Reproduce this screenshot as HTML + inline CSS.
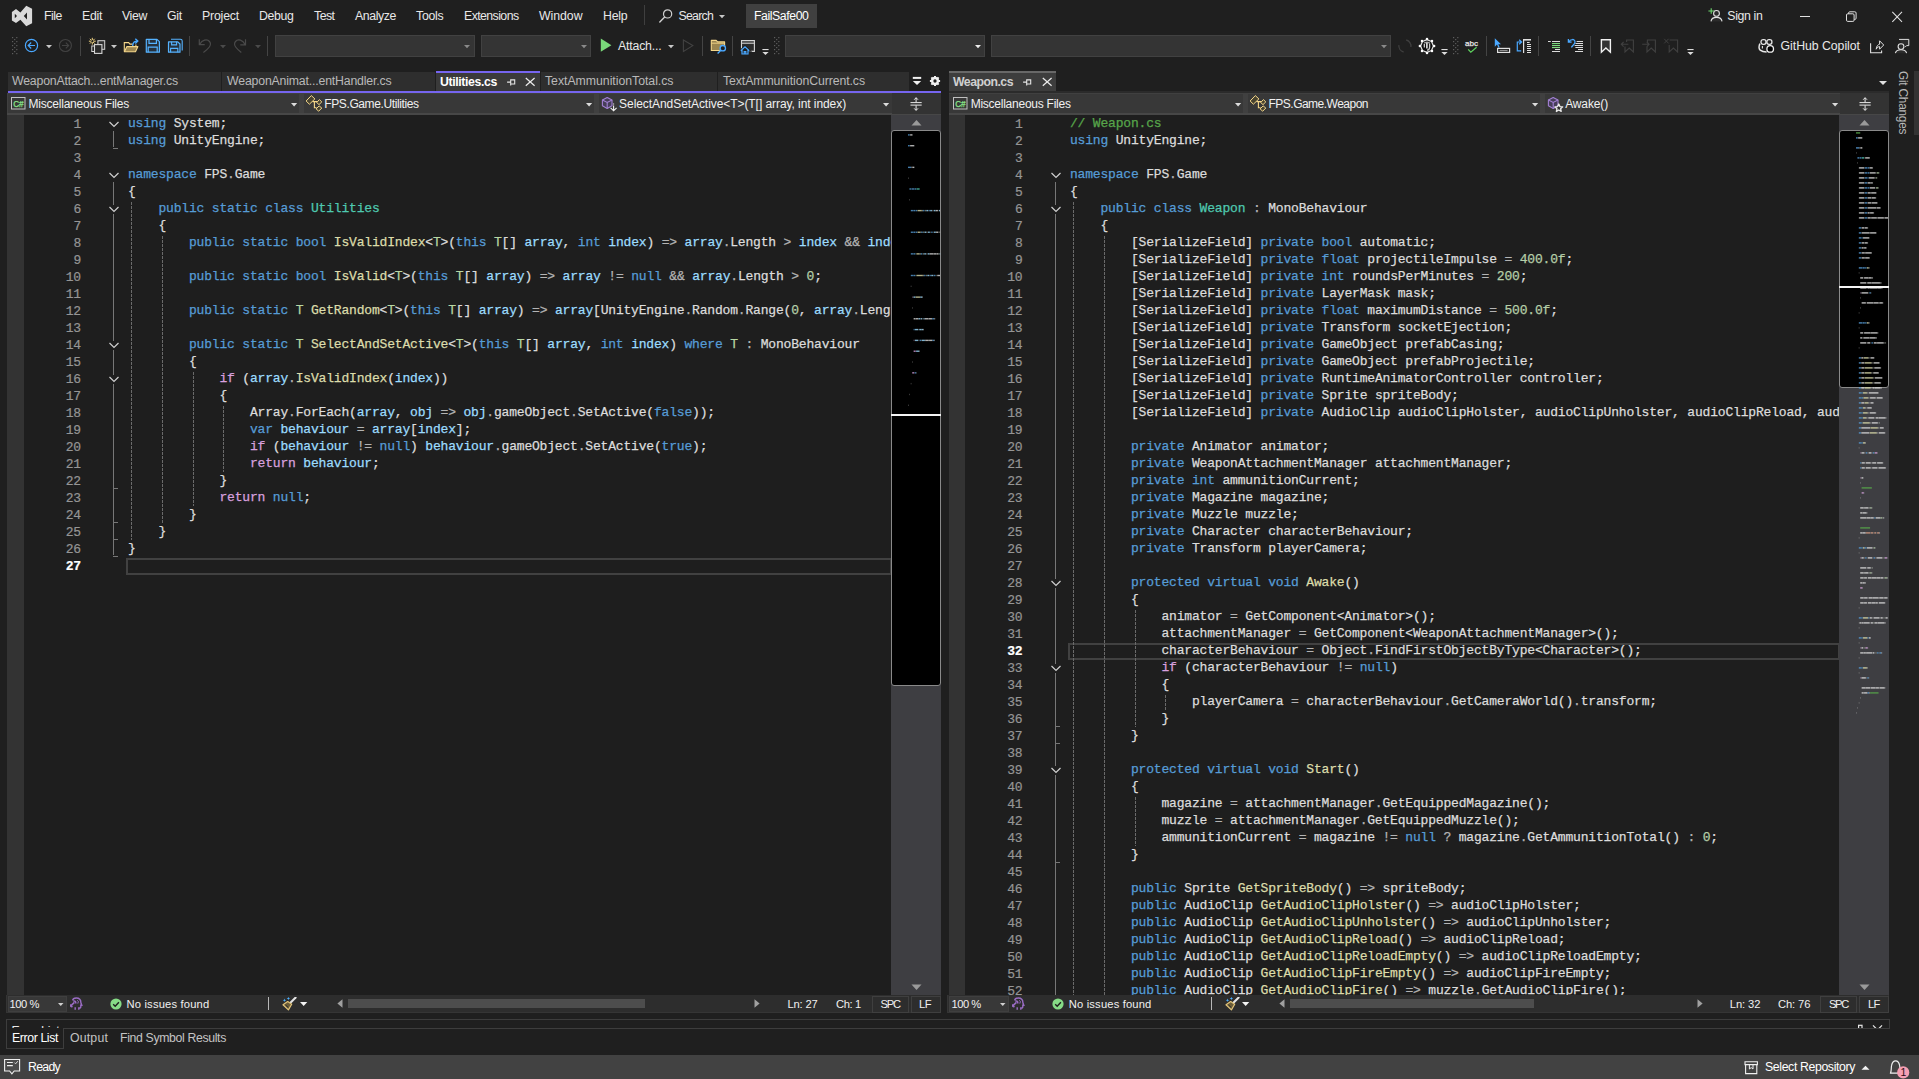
<!DOCTYPE html>
<html><head><meta charset="utf-8"><title>Visual Studio</title><style>
html,body{margin:0;padding:0;background:#1f1f1f;}
body{width:1919px;height:1079px;overflow:hidden;position:relative;font-family:"Liberation Sans",sans-serif;}
.a{position:absolute;box-sizing:border-box;}
.t{white-space:pre;}
.code{position:absolute;white-space:pre;font-family:"Liberation Mono",monospace;font-size:13px;letter-spacing:-0.18px;line-height:17px;height:17px;color:#dcdcdc;-webkit-text-stroke:0.25px currentColor;}
.ln{position:absolute;white-space:pre;font-family:"Liberation Mono",monospace;font-size:13px;letter-spacing:-0.18px;line-height:17px;height:17px;color:#959595;text-align:right;width:60px;margin-top:1px;-webkit-text-stroke:0.2px currentColor;}
.k{color:#569cd6}.c{color:#d8a0df}.ty{color:#4ec9b0}.tp{color:#b8d7a3}.m{color:#dcdcaa}.v{color:#9cdcfe}.n{color:#b5cea8}.o{color:#b4b4b4}.cm{color:#57a64a}
.clip{position:absolute;overflow:hidden;}
</style></head><body>
<svg class="a" style="left:11px;top:4px;" width="22" height="24" viewBox="0 0 22 24"><path d="M15.25 1.8 L21.1 4.75 V19.3 L15.25 22.25 L9.4 15.8 L5 19.1 L0.9 16.4 V8.1 L5 5 L9.4 8.4 Z M3.8 9.8 V14.3 L6 12 Z M16 8.5 V15.6 L12.8 12 Z" fill="#d9d9d9" fill-rule="evenodd"/></svg>
<div class="a t" style="left:44px;top:6.0px;height:20px;line-height:20px;font-size:12.3px;color:#e8e8e8;letter-spacing:-0.455px;">File</div>
<div class="a t" style="left:82px;top:6.0px;height:20px;line-height:20px;font-size:12.3px;color:#e8e8e8;letter-spacing:-0.299px;">Edit</div>
<div class="a t" style="left:122px;top:6.0px;height:20px;line-height:20px;font-size:12.3px;color:#e8e8e8;letter-spacing:-0.360px;">View</div>
<div class="a t" style="left:167px;top:6.0px;height:20px;line-height:20px;font-size:12.3px;color:#e8e8e8;letter-spacing:-0.239px;">Git</div>
<div class="a t" style="left:202px;top:6.0px;height:20px;line-height:20px;font-size:12.3px;color:#e8e8e8;letter-spacing:-0.183px;">Project</div>
<div class="a t" style="left:259px;top:6.0px;height:20px;line-height:20px;font-size:12.3px;color:#e8e8e8;letter-spacing:-0.349px;">Debug</div>
<div class="a t" style="left:314px;top:6.0px;height:20px;line-height:20px;font-size:12.3px;color:#e8e8e8;letter-spacing:-0.515px;">Test</div>
<div class="a t" style="left:355px;top:6.0px;height:20px;line-height:20px;font-size:12.3px;color:#e8e8e8;letter-spacing:-0.394px;">Analyze</div>
<div class="a t" style="left:416px;top:6.0px;height:20px;line-height:20px;font-size:12.3px;color:#e8e8e8;letter-spacing:-0.243px;">Tools</div>
<div class="a t" style="left:464px;top:6.0px;height:20px;line-height:20px;font-size:12.3px;color:#e8e8e8;letter-spacing:-0.567px;">Extensions</div>
<div class="a t" style="left:539px;top:6.0px;height:20px;line-height:20px;font-size:12.3px;color:#e8e8e8;letter-spacing:-0.041px;">Window</div>
<div class="a t" style="left:603px;top:6.0px;height:20px;line-height:20px;font-size:12.3px;color:#e8e8e8;letter-spacing:-0.199px;">Help</div>
<div class="a" style="left:644px;top:5px;width:1px;height:20px;background:#3f3f3f;"></div>
<svg class="a" style="left:658px;top:8px;" width="16" height="16" viewBox="0 0 16 16"><circle cx="9.6" cy="5.9" r="4.1" fill="none" stroke="#d0d0d0" stroke-width="1.2"/><path d="M6.7 8.9 L1.8 13.9" stroke="#d0d0d0" stroke-width="1.4" stroke-linecap="round"/></svg>
<div class="a t" style="left:678.5px;top:6.0px;height:20px;line-height:20px;font-size:12.3px;color:#e8e8e8;letter-spacing:-0.746px;">Search</div>
<svg class="a" style="left:718.0px;top:13.749999999999998px;" width="8" height="5.3" viewBox="0 0 8 5.3"><path d="M1 1 H7 L4.0 4.3 Z" fill="#c8c8c8"/></svg>
<div class="a" style="left:746px;top:4px;width:71px;height:23.5px;background:#404040;"></div>
<div class="a t" style="left:754px;top:6.0px;height:20px;line-height:20px;font-size:12.3px;color:#ffffff;letter-spacing:-0.431px;">FailSafe00</div>
<svg class="a" style="left:1707px;top:6px;" width="17" height="17" viewBox="0 0 17 17"><circle cx="9.5" cy="7.4" r="2.9" fill="#2b2b2b" stroke="#e0e0e0" stroke-width="1.1"/><path d="M4 15.4 C4.3 12.6 6.5 11.4 9.5 11.4 C12.5 11.4 14.7 12.6 15 15.4" fill="#2b2b2b" stroke="#e0e0e0" stroke-width="1.1"/><path d="M1.4 5 H7 M4.2 2.2 V7.8" stroke="#6fd76f" stroke-width="1.1"/></svg>
<div class="a t" style="left:1727.3px;top:6.0px;height:20px;line-height:20px;font-size:12.3px;color:#e8e8e8;letter-spacing:-0.344px;">Sign in</div>
<div class="a" style="left:1800px;top:15.5px;width:10px;height:1px;background:#e0e0e0;"></div>
<svg class="a" style="left:1845px;top:10px;" width="13" height="13" viewBox="0 0 13 13"><rect x="1.5" y="3.8" width="7.6" height="7.6" fill="none" stroke="#e0e0e0" stroke-width="1" rx="1.2"/><path d="M3.6 3.8 V3 Q3.6 1.8 4.8 1.8 H9.8 Q11.1 1.8 11.1 3 V8.2 Q11.1 9.4 9.9 9.4 H9.2" fill="none" stroke="#e0e0e0" stroke-width="1"/></svg>
<svg class="a" style="left:1891px;top:10px;" width="13" height="13" viewBox="0 0 13 13"><path d="M1.3 1.9 L11 11.8 M11 1.9 L1.3 11.8" stroke="#e0e0e0" stroke-width="1.05"/></svg>
<svg class="a" style="left:11.8px;top:37px;" width="6" height="18" viewBox="0 0 6 18"><rect x="0" y="0" width="1.2" height="1.2" fill="#5e5e5e"/><rect x="4.2" y="0" width="1.2" height="1.2" fill="#5e5e5e"/><rect x="2.1" y="2" width="1.2" height="1.2" fill="#5e5e5e"/><rect x="0" y="4" width="1.2" height="1.2" fill="#5e5e5e"/><rect x="4.2" y="4" width="1.2" height="1.2" fill="#5e5e5e"/><rect x="2.1" y="6" width="1.2" height="1.2" fill="#5e5e5e"/><rect x="0" y="8" width="1.2" height="1.2" fill="#5e5e5e"/><rect x="4.2" y="8" width="1.2" height="1.2" fill="#5e5e5e"/><rect x="2.1" y="10" width="1.2" height="1.2" fill="#5e5e5e"/><rect x="0" y="12" width="1.2" height="1.2" fill="#5e5e5e"/><rect x="4.2" y="12" width="1.2" height="1.2" fill="#5e5e5e"/><rect x="2.1" y="14" width="1.2" height="1.2" fill="#5e5e5e"/><rect x="0" y="16" width="1.2" height="1.2" fill="#5e5e5e"/><rect x="4.2" y="16" width="1.2" height="1.2" fill="#5e5e5e"/></svg>
<svg class="a" style="left:23px;top:37px;" width="17" height="17" viewBox="0 0 17 17"><circle cx="8.5" cy="8.5" r="6.1" fill="none" stroke="#4aa8ff" stroke-width="1.2"/><path d="M12 8.5 H5.4 M8.2 5.5 L5.2 8.5 L8.2 11.5" fill="none" stroke="#4aa8ff" stroke-width="1.2"/></svg>
<svg class="a" style="left:45.0px;top:43.95px;" width="8" height="5.3" viewBox="0 0 8 5.3"><path d="M1 1 H7 L4.0 4.3 Z" fill="#c8c8c8"/></svg>
<svg class="a" style="left:57px;top:37px;" width="17" height="17" viewBox="0 0 17 17"><circle cx="8.4" cy="8.5" r="6" fill="none" stroke="#424242" stroke-width="1.1"/><path d="M5 8.5 H11.6 M8.8 5.6 L11.7 8.5 L8.8 11.4" fill="none" stroke="#424242" stroke-width="1.1"/></svg>
<div class="a" style="left:80px;top:36px;width:1px;height:20px;background:#444444;"></div>
<svg class="a" style="left:88px;top:37px;" width="18" height="18" viewBox="0 0 18 18"><rect x="9.9" y="3.7" width="6.8" height="8.6" fill="#333333" stroke="#d6d6d6" stroke-width="1"/><rect x="3.8" y="9" width="4" height="5.5" fill="none" stroke="#d6d6d6" stroke-width="1"/><rect x="6.5" y="7.6" width="7.4" height="8.8" fill="#2a2a2a" stroke="#d6d6d6" stroke-width="1.1"/><path d="M4.3 0.8 V7.6 M0.9 4.2 H7.7 M1.9 1.8 L6.7 6.6 M6.7 1.8 L1.9 6.6" stroke="#ffe08a" stroke-width="0.95"/><circle cx="4.3" cy="4.2" r="1.1" fill="#1f1f1f"/></svg>
<svg class="a" style="left:110.0px;top:43.95px;" width="8" height="5.3" viewBox="0 0 8 5.3"><path d="M1 1 H7 L4.0 4.3 Z" fill="#c8c8c8"/></svg>
<svg class="a" style="left:123px;top:37px;" width="18" height="18" viewBox="0 0 18 18"><path d="M1.3 14.6 V5.6 H5.6 L7 7.1 H9.6" fill="none" stroke="#f5d78a" stroke-width="1.1"/><path d="M12.9 9.4 V7.6" stroke="#f5d78a" stroke-width="1.1"/><path d="M1.4 14.8 L3.9 9.6 H14.9 L12.5 14.8 Z" fill="#9c8650" stroke="#f5d78a" stroke-width="1.1" stroke-linejoin="round"/><path d="M9.7 9 C9.7 5.6 11.4 4.1 14.2 4.1 M12.3 1.7 L14.8 4.1 L12.3 6.5" fill="none" stroke="#4aa8ff" stroke-width="1.4"/></svg>
<svg class="a" style="left:145px;top:38px;" width="16" height="16" viewBox="0 0 16 16"><path d="M1.3 1.3 H12 L14.4 3.7 V14.2 H1.3 Z" fill="#26313c" stroke="#55b3ff" stroke-width="1.2" stroke-linejoin="round"/><path d="M4 1.3 V5.4 H11.4 V1.3 M3.2 14.2 V9.2 H12.2 V14.2" fill="none" stroke="#55b3ff" stroke-width="1.2"/></svg>
<svg class="a" style="left:167px;top:38px;" width="17" height="16" viewBox="0 0 17 16"><path d="M4 1.3 H13.4 Q15.2 1.3 15.2 3.1 V12.4" fill="none" stroke="#55b3ff" stroke-width="1.1"/><path d="M1.5 3.8 H10.8 L13 6 V14.2 H1.5 Z" fill="#26313c" stroke="#55b3ff" stroke-width="1.2" stroke-linejoin="round"/><path d="M4.6 3.8 V6.9 H9.6 V3.8 M3.6 14.2 V10.4 H10.8 V14.2" fill="none" stroke="#55b3ff" stroke-width="1.1"/></svg>
<div class="a" style="left:189px;top:36px;width:1px;height:20px;background:#444444;"></div>
<svg class="a" style="left:197px;top:38px;" width="16" height="16" viewBox="0 0 16 16"><path d="M2.3 1.2 V6.6 H7.7 M2.8 6.2 C5 2 10 0.5 12.5 3.5 C15.5 7 11 11 6.4 14.5" fill="none" stroke="#4a4a4a" stroke-width="1.2"/></svg>
<svg class="a" style="left:219.0px;top:43.75px;" width="8" height="5.3" viewBox="0 0 8 5.3"><path d="M1 1 H7 L4.0 4.3 Z" fill="#4a4a4a"/></svg>
<svg class="a" style="left:232px;top:38px;" width="16" height="16" viewBox="0 0 16 16"><path d="M13.5 1.2 V6.8 H8.3 M13 6.4 C11 2 6 0.5 3.5 3.5 C0.5 7 5 11 9.3 14.5" fill="none" stroke="#4a4a4a" stroke-width="1.2"/></svg>
<svg class="a" style="left:254.0px;top:43.75px;" width="8" height="5.3" viewBox="0 0 8 5.3"><path d="M1 1 H7 L4.0 4.3 Z" fill="#4a4a4a"/></svg>
<div class="a" style="left:267px;top:36px;width:1px;height:20px;background:#444444;"></div>
<div class="a" style="left:274.5px;top:35px;width:200px;height:21.5px;background:#343434;border:1px solid #414141;"></div>
<svg class="a" style="left:463.3px;top:43.85px;" width="8" height="5.3" viewBox="0 0 8 5.3"><path d="M1 1 H7 L4.0 4.3 Z" fill="#8a8a8a"/></svg>
<div class="a" style="left:480.5px;top:35px;width:110.5px;height:21.5px;background:#343434;border:1px solid #414141;"></div>
<svg class="a" style="left:579.8px;top:43.85px;" width="8" height="5.3" viewBox="0 0 8 5.3"><path d="M1 1 H7 L4.0 4.3 Z" fill="#8a8a8a"/></svg>
<svg class="a" style="left:600px;top:38px;" width="13" height="14" viewBox="0 0 13 14"><path d="M0.8 0.6 L11.4 7.2 L0.8 13.8 Z" fill="#79d879"/></svg>
<div class="a t" style="left:618px;top:36.0px;height:20px;line-height:20px;font-size:12.3px;color:#e8e8e8;letter-spacing:-0.180px;">Attach...</div>
<svg class="a" style="left:667.0px;top:43.65px;" width="8" height="5.3" viewBox="0 0 8 5.3"><path d="M1 1 H7 L4.0 4.3 Z" fill="#c8c8c8"/></svg>
<svg class="a" style="left:682px;top:39px;" width="12" height="14" viewBox="0 0 12 14"><path d="M1.4 1 L10.8 6.6 L1.4 12.4 Z" fill="none" stroke="#424242" stroke-width="1.1"/></svg>
<div class="a" style="left:702px;top:36px;width:1px;height:20px;background:#444444;"></div>
<svg class="a" style="left:710px;top:38px;" width="18" height="17" viewBox="0 0 18 17"><path d="M1.3 2.4 H6.2 L7.6 3.9 H14.6 V12.5 H1.3 Z" fill="#9c8650" stroke="#f5d78a" stroke-width="1.1" stroke-linejoin="round"/><path d="M1.3 5.2 H14.6" stroke="#f5d78a" stroke-width="0.9"/><circle cx="12.8" cy="10.2" r="2.7" fill="#1f1f1f" stroke="#4aa8ff" stroke-width="1.3"/><path d="M10.9 12.2 L7.6 15.6" stroke="#4aa8ff" stroke-width="1.4"/></svg>
<div class="a" style="left:732px;top:36px;width:1px;height:20px;background:#444444;"></div>
<svg class="a" style="left:739px;top:38px;" width="18" height="18" viewBox="0 0 18 18"><path d="M2.5 2.6 H15.4 V13.4 H2.5 Z" fill="#2b2b2b" stroke="#d4d4d4" stroke-width="1.1"/><path d="M2.5 5.2 H15.4" stroke="#d4d4d4" stroke-width="1.1"/><path d="M1.6 12.6 L6 8.6 L10.4 12.6 L9.2 12.6 V16 H2.8 V12.6 Z" fill="#1f1f1f" stroke="#1f1f1f" stroke-width="2.2"/><path d="M1.8 12.8 L6 8.9 L10.2 12.8 M3 11.9 V16 H9 V11.9 M5.2 16 V13.6 H6.8 V16" fill="none" stroke="#4aa8ff" stroke-width="1.2"/></svg>
<svg class="a" style="left:762.3px;top:49.0px;" width="7" height="7" viewBox="0 0 7 7"><rect x="0.4" y="0" width="6.2" height="1.1" fill="#dcdcdc"/><path d="M0.4 3 H6.6 L3.5 6.1 Z" fill="#dcdcdc"/></svg>
<svg class="a" style="left:773.6px;top:37px;" width="6" height="18" viewBox="0 0 6 18"><rect x="0" y="0" width="1.2" height="1.2" fill="#5e5e5e"/><rect x="4.2" y="0" width="1.2" height="1.2" fill="#5e5e5e"/><rect x="2.1" y="2" width="1.2" height="1.2" fill="#5e5e5e"/><rect x="0" y="4" width="1.2" height="1.2" fill="#5e5e5e"/><rect x="4.2" y="4" width="1.2" height="1.2" fill="#5e5e5e"/><rect x="2.1" y="6" width="1.2" height="1.2" fill="#5e5e5e"/><rect x="0" y="8" width="1.2" height="1.2" fill="#5e5e5e"/><rect x="4.2" y="8" width="1.2" height="1.2" fill="#5e5e5e"/><rect x="2.1" y="10" width="1.2" height="1.2" fill="#5e5e5e"/><rect x="0" y="12" width="1.2" height="1.2" fill="#5e5e5e"/><rect x="4.2" y="12" width="1.2" height="1.2" fill="#5e5e5e"/><rect x="2.1" y="14" width="1.2" height="1.2" fill="#5e5e5e"/><rect x="0" y="16" width="1.2" height="1.2" fill="#5e5e5e"/><rect x="4.2" y="16" width="1.2" height="1.2" fill="#5e5e5e"/></svg>
<div class="a" style="left:785px;top:35px;width:200px;height:21.5px;background:#343434;border:1px solid #414141;"></div>
<svg class="a" style="left:973.8px;top:43.85px;" width="8" height="5.3" viewBox="0 0 8 5.3"><path d="M1 1 H7 L4.0 4.3 Z" fill="#ececec"/></svg>
<div class="a" style="left:991px;top:35px;width:400px;height:21.5px;background:#343434;border:1px solid #414141;"></div>
<svg class="a" style="left:1379.8px;top:43.85px;" width="8" height="5.3" viewBox="0 0 8 5.3"><path d="M1 1 H7 L4.0 4.3 Z" fill="#8a8a8a"/></svg>
<svg class="a" style="left:1397px;top:38px;" width="16" height="16" viewBox="0 0 16 16"><path d="M9.2 2 A6.2 6.2 0 0 1 13.9 9" fill="none" stroke="#3f3f3f" stroke-width="1.3"/><path d="M6.6 14 A6.2 6.2 0 0 1 1.9 7.2" fill="none" stroke="#3f3f3f" stroke-width="1.3"/></svg>
<svg class="a" style="left:1418px;top:37px;" width="18" height="18" viewBox="0 0 18 18"><path d="M9.00 2.60 L13.53 4.47 L15.40 9.00 L13.53 13.53 L9.00 15.40 L4.47 13.53 L2.60 9.00 L4.47 4.47 Z" fill="#0c0c0c" stroke="#e0e0e0" stroke-width="1.25" stroke-linejoin="round"/><g fill="#ffffff"><circle cx="9.00" cy="1.90" r="1.25"/><circle cx="14.02" cy="3.98" r="1.25"/><circle cx="16.10" cy="9.00" r="1.25"/><circle cx="14.02" cy="14.02" r="1.25"/><circle cx="9.00" cy="16.10" r="1.25"/><circle cx="3.98" cy="14.02" r="1.25"/><circle cx="1.90" cy="9.00" r="1.25"/><circle cx="3.98" cy="3.98" r="1.25"/></g><path d="M6.2 6.4 C7 4.8 11 4.8 11.8 6.4" fill="none" stroke="#9a9a9a" stroke-width="1.6"/><path d="M8.9 5.8 V11.6" stroke="#f4f4f4" stroke-width="1.5"/><path d="M11.6 6.6 V10.4 C11.4 12.4 10 13.2 9 13.2" fill="none" stroke="#c8c8c8" stroke-width="1.3"/><path d="M6.3 7 V10.6" stroke="#d8d8d8" stroke-width="1.2"/></svg>
<svg class="a" style="left:1441.4px;top:49.0px;" width="7" height="7" viewBox="0 0 7 7"><rect x="0.4" y="0" width="6.2" height="1.1" fill="#dcdcdc"/><path d="M0.4 3 H6.6 L3.5 6.1 Z" fill="#dcdcdc"/></svg>
<svg class="a" style="left:1452.8px;top:37px;" width="6" height="18" viewBox="0 0 6 18"><rect x="0" y="0" width="1.2" height="1.2" fill="#5e5e5e"/><rect x="4.2" y="0" width="1.2" height="1.2" fill="#5e5e5e"/><rect x="2.1" y="2" width="1.2" height="1.2" fill="#5e5e5e"/><rect x="0" y="4" width="1.2" height="1.2" fill="#5e5e5e"/><rect x="4.2" y="4" width="1.2" height="1.2" fill="#5e5e5e"/><rect x="2.1" y="6" width="1.2" height="1.2" fill="#5e5e5e"/><rect x="0" y="8" width="1.2" height="1.2" fill="#5e5e5e"/><rect x="4.2" y="8" width="1.2" height="1.2" fill="#5e5e5e"/><rect x="2.1" y="10" width="1.2" height="1.2" fill="#5e5e5e"/><rect x="0" y="12" width="1.2" height="1.2" fill="#5e5e5e"/><rect x="4.2" y="12" width="1.2" height="1.2" fill="#5e5e5e"/><rect x="2.1" y="14" width="1.2" height="1.2" fill="#5e5e5e"/><rect x="0" y="16" width="1.2" height="1.2" fill="#5e5e5e"/><rect x="4.2" y="16" width="1.2" height="1.2" fill="#5e5e5e"/></svg>
<svg class="a" style="left:1464px;top:38px;" width="16" height="16" viewBox="0 0 16 16"><text x="1" y="7.9" font-family="Liberation Sans" font-size="7.6" fill="#e6e6e6" stroke="#e6e6e6" stroke-width="0.25" textLength="13" lengthAdjust="spacingAndGlyphs">abc</text><path d="M4.2 11.4 L6.8 14.2 L12.6 9.2" fill="none" stroke="#5fd35f" stroke-width="1.2"/></svg>
<div class="a" style="left:1486px;top:36px;width:1px;height:20px;background:#444444;"></div>
<svg class="a" style="left:1494px;top:38px;" width="17" height="17" viewBox="0 0 17 17"><path d="M0.8 0.3 V8.8 L3 6.6 L4.4 9.8 L5.7 9.2 L4.3 6.2 H7 Z" fill="#4aa8ff"/><rect x="3.6" y="10.4" width="12" height="4" fill="none" stroke="#e0e0e0" stroke-width="1.2"/><path d="M5.5 12.4 H13.6" stroke="#bdbdbd" stroke-width="0.8"/></svg>
<svg class="a" style="left:1516px;top:38px;" width="17" height="17" viewBox="0 0 17 17"><path d="M5.2 12.8 H1.3 V4 H4.6 M3.2 1.8 L5.6 4 L3.2 6.2" fill="none" stroke="#4aa8ff" stroke-width="1.2"/><g fill="#e0e0e0"><rect x="7" y="1" width="1.2" height="14"/><rect x="7" y="1" width="8" height="1.6"/><rect x="11" y="4" width="2.6" height="1"/><rect x="11" y="6" width="4" height="1"/><rect x="11" y="8" width="4" height="1"/><rect x="11" y="10" width="4" height="1"/><rect x="11" y="12" width="4" height="1"/><rect x="11" y="14" width="4" height="1"/></g></svg>
<div class="a" style="left:1538px;top:36px;width:1px;height:20px;background:#444444;"></div>
<svg class="a" style="left:1547px;top:38px;" width="15" height="16" viewBox="0 0 15 16"><g fill="#dcdcdc"><rect x="1" y="3" width="2.8" height="1"/><rect x="5" y="3" width="8" height="1"/><rect x="8" y="11" width="5" height="1"/><rect x="5" y="13" width="8" height="1"/></g><g fill="#7fdc7f"><rect x="5" y="5" width="8" height="1.1"/><rect x="5" y="7" width="8" height="1.1"/><rect x="5" y="9" width="8" height="1.1"/></g></svg>
<svg class="a" style="left:1567px;top:38px;" width="17" height="16" viewBox="0 0 17 16"><g fill="#dcdcdc"><rect x="9.6" y="3" width="6.4" height="1"/><rect x="8.4" y="5" width="7.6" height="1"/><rect x="7.6" y="7" width="8.4" height="1"/><rect x="8.4" y="9" width="7.6" height="1"/><rect x="11" y="11" width="5" height="1"/><rect x="8" y="13" width="8" height="1"/></g><path d="M1.4 1 V4.2 H4.6 M1.8 4 C3.4 0.8 8 0.6 8 4 C8 6.4 5.4 7.4 4.4 9.6" fill="none" stroke="#4aa8ff" stroke-width="1.3"/></svg>
<div class="a" style="left:1590px;top:36px;width:1px;height:20px;background:#444444;"></div>
<svg class="a" style="left:1600px;top:38px;" width="12" height="16" viewBox="0 0 12 16"><path d="M1.4 1.8 H10.4 V14.2 L5.9 10 L1.4 14.2 Z" fill="#333333" stroke="#f0f0f0" stroke-width="1.4" stroke-linejoin="miter"/></svg>
<svg class="a" style="left:1620px;top:38px;" width="16" height="16" viewBox="0 0 16 16"><path d="M6.6 4 V2 H13.4 V14 L9.2 10 L5 14 V8.6" fill="none" stroke="#404040" stroke-width="1.1"/><path d="M8.4 6.3 H1.4 M3.6 4 L1.3 6.3 L3.6 8.6" fill="none" stroke="#404040" stroke-width="1.1"/></svg>
<svg class="a" style="left:1641px;top:38px;" width="16" height="16" viewBox="0 0 16 16"><path d="M6.4 4 V2 H14.4 V14 L10.2 10 L6 14 V8.6" fill="none" stroke="#404040" stroke-width="1.1"/><path d="M1.2 6.3 H8 M5.8 4 L8.1 6.3 L5.8 8.6" fill="none" stroke="#404040" stroke-width="1.1"/></svg>
<svg class="a" style="left:1663px;top:38px;" width="16" height="16" viewBox="0 0 16 16"><path d="M6.6 2 H14.6 V14 L10.4 10 L6.2 14 V7" fill="none" stroke="#404040" stroke-width="1.1"/><path d="M1.2 0.8 L5.6 5.4 M5.6 0.8 L1.2 5.4" fill="none" stroke="#404040" stroke-width="1"/></svg>
<svg class="a" style="left:1686.5px;top:49.0px;" width="7" height="7" viewBox="0 0 7 7"><rect x="0.4" y="0" width="6.2" height="1.1" fill="#dcdcdc"/><path d="M0.4 3 H6.6 L3.5 6.1 Z" fill="#dcdcdc"/></svg>
<svg class="a" style="left:1758px;top:38px;" width="18" height="17" viewBox="0 0 18 17"><rect x="3" y="1.6" width="5" height="4.8" rx="2.1" fill="none" stroke="#e6e6e6" stroke-width="1.3"/><rect x="8.9" y="1.6" width="5" height="4.8" rx="2.1" fill="none" stroke="#e6e6e6" stroke-width="1.3"/><path d="M1.9 5.6 C0.9 8 0.9 11 2.2 12.2 C4 13.6 6.4 14 8.6 14" fill="none" stroke="#e6e6e6" stroke-width="1.5"/><path d="M4.4 8 V10.4" stroke="#e6e6e6" stroke-width="1.1"/><circle cx="12.2" cy="10.9" r="3.3" fill="#000000" stroke="#f0f0f0" stroke-width="1.3"/></svg>
<div class="a t" style="left:1780.6px;top:36.0px;height:20px;line-height:20px;font-size:12.3px;color:#e8e8e8;letter-spacing:-0.042px;">GitHub Copilot</div>
<svg class="a" style="left:1869px;top:38px;" width="17" height="17" viewBox="0 0 17 17"><path d="M1.6 5.2 V14.8 H12.6 V12.6" fill="none" stroke="#e0e0e0" stroke-width="1.1"/><path d="M7.2 11.2 C7.5 8 9 6.5 10.6 6.2 V2.8 L14.7 7 L10.6 11.2 V8.6 C9.2 8.6 8.2 9.4 7.2 11.2 Z" fill="none" stroke="#e0e0e0" stroke-width="1" stroke-linejoin="round"/></svg>
<svg class="a" style="left:1894px;top:38px;" width="17" height="17" viewBox="0 0 17 17"><path d="M5 1.4 H14.8 V7.6 H12.6 L11 9.2" fill="#2b2b2b" stroke="#e0e0e0" stroke-width="1" stroke-linejoin="round"/><circle cx="7" cy="8.6" r="2.9" fill="#2b2b2b" stroke="#e0e0e0" stroke-width="1.1"/><path d="M1.4 15.2 C1.8 12.8 4 11.8 7 11.8 C10 11.8 12.2 12.8 12.6 15.2" fill="#2b2b2b" stroke="#e0e0e0" stroke-width="1.1"/></svg>
<div class="a" style="left:8px;top:72px;width:212.5px;height:19.5px;background:#2e2e2e;"></div>
<div class="a t" style="left:12px;top:71.0px;height:20px;line-height:20px;font-size:12.3px;color:#b9b9b9;letter-spacing:-0.193px;">WeaponAttach...entManager.cs</div>
<div class="a" style="left:222px;top:72px;width:213px;height:19.5px;background:#2e2e2e;"></div>
<div class="a t" style="left:227px;top:71.0px;height:20px;line-height:20px;font-size:12.3px;color:#b9b9b9;letter-spacing:-0.173px;">WeaponAnimat...entHandler.cs</div>
<div class="a" style="left:540.5px;top:72px;width:176px;height:19.5px;background:#2e2e2e;"></div>
<div class="a t" style="left:545px;top:71.0px;height:20px;line-height:20px;font-size:12.3px;color:#b9b9b9;letter-spacing:-0.032px;">TextAmmunitionTotal.cs</div>
<div class="a" style="left:718px;top:72px;width:191px;height:19.5px;background:#2e2e2e;"></div>
<div class="a t" style="left:723px;top:71.0px;height:20px;line-height:20px;font-size:12.3px;color:#b9b9b9;letter-spacing:-0.093px;">TextAmmunitionCurrent.cs</div>
<div class="a" style="left:436px;top:71px;width:104px;height:21px;background:#3a3a3a;border-top:2px solid #7665f0;"></div>
<div class="a t" style="left:440px;top:71.5px;height:20px;line-height:20px;font-size:12.3px;color:#ffffff;font-weight:bold;letter-spacing:-0.377px;">Utilities.cs</div>
<svg class="a" style="left:506px;top:76px;" width="11" height="11" viewBox="0 0 11 11"><path d="M1.1 6.1 H4.7 M4.7 3.2 V9.6 M4.7 3.9 H8.7 V8 H4.7" fill="none" stroke="#e6e6e6" stroke-width="1.1"/></svg>
<svg class="a" style="left:523.5px;top:76px;" width="11" height="11" viewBox="0 0 11 11"><path d="M1.8 2 L10.6 9.8 M10.6 2 L1.8 9.8" stroke="#ececec" stroke-width="1.2"/></svg>
<svg class="a" style="left:912px;top:76px;" width="10" height="10" viewBox="0 0 10 10"><rect x="0.8" y="0.9" width="8.4" height="2" fill="#f0f0f0"/><path d="M0.8 5 H9.2 L5 9 Z" fill="#f0f0f0"/></svg>
<svg class="a" style="left:929px;top:75.1px;" width="12" height="12" viewBox="0 0 12 12"><g fill="none" stroke="#f0f0f0"><circle cx="6" cy="6" r="2.9" stroke-width="2.5"/><path d="M9.60 6.00 L11.10 6.00 M8.55 8.55 L9.61 9.61 M6.00 9.60 L6.00 11.10 M3.45 8.55 L2.39 9.61 M2.40 6.00 L0.90 6.00 M3.45 3.45 L2.39 2.39 M6.00 2.40 L6.00 0.90 M8.55 3.45 L9.61 2.39" stroke-width="2"/></g></svg>
<div class="a" style="left:7.5px;top:91px;width:933px;height:2px;background:#7665f0;"></div>
<div class="a" style="left:949px;top:71px;width:107px;height:20px;background:#3d3d3d;border-top:2px solid #686868;"></div>
<div class="a t" style="left:953px;top:71.5px;height:20px;line-height:20px;font-size:12.3px;color:#d0d0d0;font-weight:bold;letter-spacing:-0.523px;">Weapon.cs</div>
<svg class="a" style="left:1022px;top:76px;" width="11" height="11" viewBox="0 0 11 11"><path d="M1.1 6.1 H4.7 M4.7 3.2 V9.6 M4.7 3.9 H8.7 V8 H4.7" fill="none" stroke="#e6e6e6" stroke-width="1.1"/></svg>
<svg class="a" style="left:1040.5px;top:76px;" width="11" height="11" viewBox="0 0 11 11"><path d="M1.8 2 L10.6 9.8 M10.6 2 L1.8 9.8" stroke="#ececec" stroke-width="1.2"/></svg>
<div class="a" style="left:948px;top:91px;width:941px;height:2px;background:#2b2b2b;"></div>
<svg class="a" style="left:1877.8px;top:80.0px;" width="10" height="6" viewBox="0 0 10 6"><path d="M1 1 H9 L5.0 5 Z" fill="#e0e0e0"/></svg>
<div class="a t" style="left:1909.6px;top:70.8px;font-size:11.9px;color:#b8b8b8;transform-origin:0 0;transform:rotate(90deg);line-height:14px;height:14px;letter-spacing:-0.26px;">Git Changes</div>
<div class="a" style="left:1914px;top:71px;width:5px;height:63.5px;background:#333333;"></div>
<div class="a" style="left:6.5px;top:93px;width:934.5px;height:22px;background:#474747;"></div>
<div class="a" style="left:6.5px;top:93px;width:934.5px;height:20px;background:#404040;"></div>
<div class="a" style="left:8px;top:94px;width:291px;height:19px;background:#383838;"></div>
<svg class="a" style="left:11px;top:95.5px;overflow:visible;" width="16" height="16" viewBox="0 0 16 16"><rect x="0.5" y="1.5" width="13.5" height="11.5" fill="none" stroke="#c0c0c0" stroke-width="1"/><text x="2.2" y="10.8" font-family="Liberation Sans" font-size="8.5" fill="#8ae68a" stroke="#8ae68a" stroke-width="0.25" textLength="10.5" lengthAdjust="spacingAndGlyphs">C#</text></svg>
<div class="a t" style="left:28.6px;top:93.6px;height:20px;line-height:20px;font-size:12px;color:#f0f0f0;letter-spacing:-0.227px;">Miscellaneous Files</div>
<svg class="a" style="left:289.7px;top:101.5px;" width="8.2" height="5.4" viewBox="0 0 8.2 5.4"><path d="M1 1 H7.2 L4.1 4.4 Z" fill="#dcdcdc"/></svg>
<div class="a" style="left:304px;top:94px;width:290px;height:19px;background:#383838;"></div>
<svg class="a" style="left:306px;top:95.5px;overflow:visible;" width="16" height="16" viewBox="0 0 16 16"><g fill="#48432f" stroke="#f5d78a" stroke-width="1" stroke-linejoin="round"><path d="M5.3 -0.4 L8.9 2.9 L3.4 8.2 L0.1 5 Z"/><path d="M13.4 3.6 L15.8 5.9 L13 8.6 L10.7 6.5 Z"/><path d="M13.1 9.9 L15.8 12 L12.7 15.2 L10.1 12.9 Z"/></g><path d="M6.6 5.6 H11.2 M8.4 5.6 V11.8 H10.6" fill="none" stroke="#f5d78a" stroke-width="1.1"/></svg>
<div class="a t" style="left:324.3px;top:93.6px;height:20px;line-height:20px;font-size:12px;color:#f0f0f0;letter-spacing:-0.392px;">FPS.Game.Utilities</div>
<svg class="a" style="left:584.6999999999999px;top:101.5px;" width="8.2" height="5.4" viewBox="0 0 8.2 5.4"><path d="M1 1 H7.2 L4.1 4.4 Z" fill="#dcdcdc"/></svg>
<div class="a" style="left:599px;top:94px;width:292.5px;height:19px;background:#383838;"></div>
<svg class="a" style="left:601px;top:95.5px;overflow:visible;" width="16" height="16" viewBox="0 0 16 16"><path d="M1.4 4 L6.2 1.5 L11 4 V9.8 L6.2 12.4 L1.4 9.8 Z" fill="#463e58" stroke="#a381d4" stroke-width="1.1" stroke-linejoin="round"/><path d="M1.4 4 L6.2 6.5 L11 4 M6.2 6.5 V12.4" fill="none" stroke="#a381d4" stroke-width="1.1"/><path d="M12.6 7.6 V8.6 M12.6 9.6 V14.6 M9.6 11.8 L12.6 14.8 L15.6 11.8" fill="none" stroke="#f0f0f0" stroke-width="1.1"/></svg>
<div class="a t" style="left:619.1px;top:93.6px;height:20px;line-height:20px;font-size:12px;color:#f0f0f0;letter-spacing:-0.067px;">SelectAndSetActive&lt;T&gt;(T[] array, int index)</div>
<svg class="a" style="left:882.1999999999999px;top:101.5px;" width="8.2" height="5.4" viewBox="0 0 8.2 5.4"><path d="M1 1 H7.2 L4.1 4.4 Z" fill="#dcdcdc"/></svg>
<div class="a" style="left:892px;top:93px;width:49px;height:20.5px;background:#333333;"></div>
<svg class="a" style="left:910.4px;top:95.5px;" width="12.4" height="16" viewBox="0 0 12.4 16"><path d="M0.5 6.6 H11.7 M0.5 9.1 H11.7 M6.1 1.8 V6.4 M6.1 9.3 V14.2 M4.2 3.7 L6.1 1.7 L8 3.7 M4.2 12.4 L6.1 14.4 L8 12.4" fill="none" stroke="#e8e8e8" stroke-width="1"/></svg>
<div class="a" style="left:947.5px;top:93px;width:941.5px;height:22px;background:#474747;"></div>
<div class="a" style="left:947.5px;top:93px;width:941.5px;height:20px;background:#404040;"></div>
<div class="a" style="left:949px;top:94px;width:294px;height:19px;background:#383838;"></div>
<svg class="a" style="left:952.5px;top:95.5px;overflow:visible;" width="16" height="16" viewBox="0 0 16 16"><rect x="0.5" y="1.5" width="13.5" height="11.5" fill="none" stroke="#c0c0c0" stroke-width="1"/><text x="2.2" y="10.8" font-family="Liberation Sans" font-size="8.5" fill="#8ae68a" stroke="#8ae68a" stroke-width="0.25" textLength="10.5" lengthAdjust="spacingAndGlyphs">C#</text></svg>
<div class="a t" style="left:970.7px;top:93.6px;height:20px;line-height:20px;font-size:12px;color:#f0f0f0;letter-spacing:-0.248px;">Miscellaneous Files</div>
<svg class="a" style="left:1233.7px;top:101.5px;" width="8.2" height="5.4" viewBox="0 0 8.2 5.4"><path d="M1 1 H7.2 L4.1 4.4 Z" fill="#dcdcdc"/></svg>
<div class="a" style="left:1248px;top:94px;width:292px;height:19px;background:#383838;"></div>
<svg class="a" style="left:1249.8px;top:95.5px;overflow:visible;" width="16" height="16" viewBox="0 0 16 16"><g fill="#48432f" stroke="#f5d78a" stroke-width="1" stroke-linejoin="round"><path d="M5.3 -0.4 L8.9 2.9 L3.4 8.2 L0.1 5 Z"/><path d="M13.4 3.6 L15.8 5.9 L13 8.6 L10.7 6.5 Z"/><path d="M13.1 9.9 L15.8 12 L12.7 15.2 L10.1 12.9 Z"/></g><path d="M6.6 5.6 H11.2 M8.4 5.6 V11.8 H10.6" fill="none" stroke="#f5d78a" stroke-width="1.1"/></svg>
<div class="a t" style="left:1268.5px;top:93.6px;height:20px;line-height:20px;font-size:12px;color:#f0f0f0;letter-spacing:-0.511px;">FPS.Game.Weapon</div>
<svg class="a" style="left:1530.7px;top:101.5px;" width="8.2" height="5.4" viewBox="0 0 8.2 5.4"><path d="M1 1 H7.2 L4.1 4.4 Z" fill="#dcdcdc"/></svg>
<div class="a" style="left:1545px;top:94px;width:295px;height:19px;background:#383838;"></div>
<svg class="a" style="left:1547.1px;top:95.5px;overflow:visible;" width="16" height="16" viewBox="0 0 16 16"><path d="M1.4 4 L6.2 1.5 L11 4 V9.8 L6.2 12.4 L1.4 9.8 Z" fill="#463e58" stroke="#a381d4" stroke-width="1.1" stroke-linejoin="round"/><path d="M1.4 4 L6.2 6.5 L11 4 M6.2 6.5 V12.4" fill="none" stroke="#a381d4" stroke-width="1.1"/><path d="M11.80 8.00 L12.92 10.56 L15.70 10.83 L13.61 12.69 L14.21 15.42 L11.80 14.00 L9.39 15.42 L9.99 12.69 L7.90 10.83 L10.68 10.56 Z" fill="#2e2e2e" stroke="#ececec" stroke-width="1.35" stroke-linejoin="round"/></svg>
<div class="a t" style="left:1565.2px;top:93.6px;height:20px;line-height:20px;font-size:12px;color:#f0f0f0;letter-spacing:-0.142px;">Awake()</div>
<svg class="a" style="left:1830.7px;top:101.5px;" width="8.2" height="5.4" viewBox="0 0 8.2 5.4"><path d="M1 1 H7.2 L4.1 4.4 Z" fill="#dcdcdc"/></svg>
<div class="a" style="left:1840px;top:93px;width:49px;height:20.5px;background:#333333;"></div>
<svg class="a" style="left:1858.6px;top:95.5px;" width="12.4" height="16" viewBox="0 0 12.4 16"><path d="M0.5 6.6 H11.7 M0.5 9.1 H11.7 M6.1 1.8 V6.4 M6.1 9.3 V14.2 M4.2 3.7 L6.1 1.7 L8 3.7 M4.2 12.4 L6.1 14.4 L8 12.4" fill="none" stroke="#e8e8e8" stroke-width="1"/></svg>
<div class="a" style="left:8px;top:115px;width:933px;height:880px;background:#1e1e1e;"></div>
<div class="a" style="left:6.5px;top:115px;width:17.8px;height:880px;background:#333333;"></div>
<div class="clip" style="left:8px;top:115px;width:883px;height:880px;">
<div class="a" style="left:118px;top:442.5px;width:766px;height:17.5px;border:2px solid #414141;"></div>
<div class="a" style="left:123.00px;top:87px;width:1px;height:338px;background:repeating-linear-gradient(to bottom,#6a6a6a 0,#6a6a6a 3px,transparent 3px,transparent 4px);"></div>
<div class="a" style="left:154.00px;top:121px;width:1px;height:287px;background:repeating-linear-gradient(to bottom,#6a6a6a 0,#6a6a6a 3px,transparent 3px,transparent 4px);"></div>
<div class="a" style="left:185.00px;top:257px;width:1px;height:134px;background:repeating-linear-gradient(to bottom,#6a6a6a 0,#6a6a6a 3px,transparent 3px,transparent 4px);"></div>
<div class="a" style="left:215.00px;top:291px;width:1px;height:66px;background:repeating-linear-gradient(to bottom,#6a6a6a 0,#6a6a6a 3px,transparent 3px,transparent 4px);"></div>
<div class="a" style="left:105px;top:16px;width:1px;height:16px;background:#777777;"></div>
<div class="a" style="left:105px;top:33px;width:5px;height:1px;background:#777777;"></div>
<div class="a" style="left:105px;top:67px;width:1px;height:373px;background:#777777;"></div>
<div class="a" style="left:105px;top:373px;width:5px;height:1px;background:#777777;"></div>
<div class="a" style="left:105px;top:407px;width:5px;height:1px;background:#777777;"></div>
<div class="a" style="left:105px;top:424px;width:5px;height:1px;background:#777777;"></div>
<div class="a" style="left:105px;top:441px;width:5px;height:1px;background:#777777;"></div>
<svg class="a" style="left:99.5px;top:5px;background:#1e1e1e" width="12" height="9" viewBox="0 0 12 9"><path d="M1.5 2 L6 6.5 L10.5 2" fill="none" stroke="#d0d0d0" stroke-width="1.2"/></svg>
<svg class="a" style="left:99.5px;top:56px;background:#1e1e1e" width="12" height="9" viewBox="0 0 12 9"><path d="M1.5 2 L6 6.5 L10.5 2" fill="none" stroke="#d0d0d0" stroke-width="1.2"/></svg>
<svg class="a" style="left:99.5px;top:90px;background:#1e1e1e" width="12" height="9" viewBox="0 0 12 9"><path d="M1.5 2 L6 6.5 L10.5 2" fill="none" stroke="#d0d0d0" stroke-width="1.2"/></svg>
<svg class="a" style="left:99.5px;top:226px;background:#1e1e1e" width="12" height="9" viewBox="0 0 12 9"><path d="M1.5 2 L6 6.5 L10.5 2" fill="none" stroke="#d0d0d0" stroke-width="1.2"/></svg>
<svg class="a" style="left:99.5px;top:260px;background:#1e1e1e" width="12" height="9" viewBox="0 0 12 9"><path d="M1.5 2 L6 6.5 L10.5 2" fill="none" stroke="#d0d0d0" stroke-width="1.2"/></svg>
<div class="ln" style="left:13.0px;top:0px;">1</div>
<div class="code" style="left:120px;top:0px;"><span class="k">using</span> System;</div>
<div class="ln" style="left:13.0px;top:17px;">2</div>
<div class="code" style="left:120px;top:17px;"><span class="k">using</span> UnityEngine;</div>
<div class="ln" style="left:13.0px;top:34px;">3</div>
<div class="ln" style="left:13.0px;top:51px;">4</div>
<div class="code" style="left:120px;top:51px;"><span class="k">namespace</span> FPS<span class="o">.</span>Game</div>
<div class="ln" style="left:13.0px;top:68px;">5</div>
<div class="code" style="left:120px;top:68px;">{</div>
<div class="ln" style="left:13.0px;top:85px;">6</div>
<div class="code" style="left:120px;top:85px;">    <span class="k">public</span> <span class="k">static</span> <span class="k">class</span> <span class="ty">Utilities</span></div>
<div class="ln" style="left:13.0px;top:102px;">7</div>
<div class="code" style="left:120px;top:102px;">    {</div>
<div class="ln" style="left:13.0px;top:119px;">8</div>
<div class="code" style="left:120px;top:119px;">        <span class="k">public</span> <span class="k">static</span> <span class="k">bool</span> <span class="m">IsValidIndex</span>&lt;<span class="tp">T</span>&gt;(<span class="k">this</span> <span class="tp">T</span>[] <span class="v">array</span>, <span class="k">int</span> <span class="v">index</span>) <span class="o">=&gt;</span> <span class="v">array</span><span class="o">.</span>Length <span class="o">&gt;</span> <span class="v">index</span> <span class="o">&amp;&amp;</span> <span class="v">index</span> <span class="o">&gt;=</span> <span class="n">0</span>;</div>
<div class="ln" style="left:13.0px;top:136px;">9</div>
<div class="ln" style="left:13.0px;top:153px;">10</div>
<div class="code" style="left:120px;top:153px;">        <span class="k">public</span> <span class="k">static</span> <span class="k">bool</span> <span class="m">IsValid</span>&lt;<span class="tp">T</span>&gt;(<span class="k">this</span> <span class="tp">T</span>[] <span class="v">array</span>) <span class="o">=&gt;</span> <span class="v">array</span> <span class="o">!=</span> <span class="k">null</span> <span class="o">&amp;&amp;</span> <span class="v">array</span><span class="o">.</span>Length <span class="o">&gt;</span> <span class="n">0</span>;</div>
<div class="ln" style="left:13.0px;top:170px;">11</div>
<div class="ln" style="left:13.0px;top:187px;">12</div>
<div class="code" style="left:120px;top:187px;">        <span class="k">public</span> <span class="k">static</span> <span class="tp">T</span> <span class="m">GetRandom</span>&lt;<span class="tp">T</span>&gt;(<span class="k">this</span> <span class="tp">T</span>[] <span class="v">array</span>) <span class="o">=&gt;</span> <span class="v">array</span>[UnityEngine<span class="o">.</span>Random<span class="o">.</span>Range(<span class="n">0</span>, <span class="v">array</span><span class="o">.</span>Length)];</div>
<div class="ln" style="left:13.0px;top:204px;">13</div>
<div class="ln" style="left:13.0px;top:221px;">14</div>
<div class="code" style="left:120px;top:221px;">        <span class="k">public</span> <span class="k">static</span> <span class="tp">T</span> <span class="m">SelectAndSetActive</span>&lt;<span class="tp">T</span>&gt;(<span class="k">this</span> <span class="tp">T</span>[] <span class="v">array</span>, <span class="k">int</span> <span class="v">index</span>) <span class="k">where</span> <span class="tp">T</span> <span class="o">:</span> MonoBehaviour</div>
<div class="ln" style="left:13.0px;top:238px;">15</div>
<div class="code" style="left:120px;top:238px;">        {</div>
<div class="ln" style="left:13.0px;top:255px;">16</div>
<div class="code" style="left:120px;top:255px;">            <span class="c">if</span> (<span class="v">array</span><span class="o">.</span><span class="m">IsValidIndex</span>(<span class="v">index</span>))</div>
<div class="ln" style="left:13.0px;top:272px;">17</div>
<div class="code" style="left:120px;top:272px;">            {</div>
<div class="ln" style="left:13.0px;top:289px;">18</div>
<div class="code" style="left:120px;top:289px;">                Array<span class="o">.</span>ForEach(<span class="v">array</span>, <span class="v">obj</span> <span class="o">=&gt;</span> <span class="v">obj</span><span class="o">.</span>gameObject<span class="o">.</span>SetActive(<span class="k">false</span>));</div>
<div class="ln" style="left:13.0px;top:306px;">19</div>
<div class="code" style="left:120px;top:306px;">                <span class="k">var</span> <span class="v">behaviour</span> <span class="o">=</span> <span class="v">array</span>[<span class="v">index</span>];</div>
<div class="ln" style="left:13.0px;top:323px;">20</div>
<div class="code" style="left:120px;top:323px;">                <span class="c">if</span> (<span class="v">behaviour</span> <span class="o">!=</span> <span class="k">null</span>) <span class="v">behaviour</span><span class="o">.</span>gameObject<span class="o">.</span>SetActive(<span class="k">true</span>);</div>
<div class="ln" style="left:13.0px;top:340px;">21</div>
<div class="code" style="left:120px;top:340px;">                <span class="c">return</span> <span class="v">behaviour</span>;</div>
<div class="ln" style="left:13.0px;top:357px;">22</div>
<div class="code" style="left:120px;top:357px;">            }</div>
<div class="ln" style="left:13.0px;top:374px;">23</div>
<div class="code" style="left:120px;top:374px;">            <span class="c">return</span> <span class="k">null</span>;</div>
<div class="ln" style="left:13.0px;top:391px;">24</div>
<div class="code" style="left:120px;top:391px;">        }</div>
<div class="ln" style="left:13.0px;top:408px;">25</div>
<div class="code" style="left:120px;top:408px;">    }</div>
<div class="ln" style="left:13.0px;top:425px;">26</div>
<div class="code" style="left:120px;top:425px;">}</div>
<div class="ln" style="left:13.0px;top:442px;color:#ffffff;font-weight:bold;">27</div>
</div>
<div class="a" style="left:891px;top:115px;width:50px;height:880px;background:#3e3e42;"></div>
<svg class="a" style="left:910.5px;top:119px;" width="11" height="7" viewBox="0 0 11 7"><path d="M0.5 6.5 L5.5 1 L10.5 6.5 Z" fill="#9a9a9a"/></svg>
<svg class="a" style="left:910.5px;top:984px;" width="11" height="7" viewBox="0 0 11 7"><path d="M0.5 0.5 L5.5 6 L10.5 0.5 Z" fill="#9a9a9a"/></svg>
<svg class="a" style="left:891px;top:130px;" width="49.5" height="563" viewBox="0 0 49.5 563"><rect x="0.5" y="0.5" width="49" height="555.0" rx="2.5" fill="#000000" stroke="#8a8a8a" stroke-width="1"/><rect x="17.00" y="4.21" width="1.76" height="1.4" fill="#569cd6" opacity="0.8"/><rect x="19.11" y="4.21" width="2.11" height="1.4" fill="#dcdcdc" opacity="0.8"/><rect x="21.22" y="4.21" width="0.50" height="1.4" fill="#dcdcdc" opacity="0.5"/><rect x="17.00" y="15.02" width="1.76" height="1.4" fill="#569cd6" opacity="0.8"/><rect x="19.11" y="15.02" width="3.87" height="1.4" fill="#dcdcdc" opacity="0.8"/><rect x="22.98" y="15.02" width="0.50" height="1.4" fill="#dcdcdc" opacity="0.5"/><rect x="17.00" y="36.65" width="3.17" height="1.4" fill="#569cd6" opacity="0.8"/><rect x="20.52" y="36.65" width="1.06" height="1.4" fill="#dcdcdc" opacity="0.8"/><rect x="21.58" y="36.65" width="0.50" height="1.4" fill="#b4b4b4" opacity="0.5"/><rect x="21.93" y="36.65" width="1.41" height="1.4" fill="#dcdcdc" opacity="0.8"/><rect x="17.00" y="47.47" width="0.50" height="1.4" fill="#dcdcdc" opacity="0.5"/><rect x="18.41" y="58.28" width="2.11" height="1.4" fill="#569cd6" opacity="0.8"/><rect x="20.87" y="58.28" width="2.11" height="1.4" fill="#569cd6" opacity="0.8"/><rect x="23.34" y="58.28" width="1.76" height="1.4" fill="#569cd6" opacity="0.8"/><rect x="25.45" y="58.28" width="3.17" height="1.4" fill="#4ec9b0" opacity="0.8"/><rect x="18.41" y="69.10" width="0.50" height="1.4" fill="#dcdcdc" opacity="0.5"/><rect x="19.82" y="79.91" width="2.11" height="1.4" fill="#569cd6" opacity="0.8"/><rect x="22.28" y="79.91" width="2.11" height="1.4" fill="#569cd6" opacity="0.8"/><rect x="24.74" y="79.91" width="1.41" height="1.4" fill="#569cd6" opacity="0.8"/><rect x="26.50" y="79.91" width="4.22" height="1.4" fill="#dcdcaa" opacity="0.8"/><rect x="30.73" y="79.91" width="0.50" height="1.4" fill="#dcdcdc" opacity="0.5"/><rect x="31.08" y="79.91" width="0.50" height="1.4" fill="#b8d7a3" opacity="0.5"/><rect x="31.43" y="79.91" width="0.50" height="1.4" fill="#dcdcdc" opacity="0.5"/><rect x="31.78" y="79.91" width="0.50" height="1.4" fill="#dcdcdc" opacity="0.5"/><rect x="32.14" y="79.91" width="1.41" height="1.4" fill="#569cd6" opacity="0.8"/><rect x="33.90" y="79.91" width="0.50" height="1.4" fill="#b8d7a3" opacity="0.5"/><rect x="34.25" y="79.91" width="0.50" height="1.4" fill="#dcdcdc" opacity="0.5"/><rect x="34.60" y="79.91" width="0.50" height="1.4" fill="#dcdcdc" opacity="0.5"/><rect x="35.30" y="79.91" width="1.76" height="1.4" fill="#9cdcfe" opacity="0.8"/><rect x="37.06" y="79.91" width="0.50" height="1.4" fill="#dcdcdc" opacity="0.5"/><rect x="37.77" y="79.91" width="1.06" height="1.4" fill="#569cd6" opacity="0.8"/><rect x="39.18" y="79.91" width="1.76" height="1.4" fill="#9cdcfe" opacity="0.8"/><rect x="40.94" y="79.91" width="0.50" height="1.4" fill="#dcdcdc" opacity="0.5"/><rect x="41.64" y="79.91" width="0.70" height="1.4" fill="#b4b4b4" opacity="0.5"/><rect x="42.70" y="79.91" width="1.76" height="1.4" fill="#9cdcfe" opacity="0.8"/><rect x="44.46" y="79.91" width="0.50" height="1.4" fill="#b4b4b4" opacity="0.5"/><rect x="44.81" y="79.91" width="2.11" height="1.4" fill="#dcdcdc" opacity="0.8"/><rect x="47.27" y="79.91" width="0.50" height="1.4" fill="#b4b4b4" opacity="0.5"/><rect x="47.98" y="79.91" width="1.02" height="1.4" fill="#9cdcfe" opacity="0.8"/><rect x="19.82" y="101.54" width="2.11" height="1.4" fill="#569cd6" opacity="0.8"/><rect x="22.28" y="101.54" width="2.11" height="1.4" fill="#569cd6" opacity="0.8"/><rect x="24.74" y="101.54" width="1.41" height="1.4" fill="#569cd6" opacity="0.8"/><rect x="26.50" y="101.54" width="2.46" height="1.4" fill="#dcdcaa" opacity="0.8"/><rect x="28.97" y="101.54" width="0.50" height="1.4" fill="#dcdcdc" opacity="0.5"/><rect x="29.32" y="101.54" width="0.50" height="1.4" fill="#b8d7a3" opacity="0.5"/><rect x="29.67" y="101.54" width="0.50" height="1.4" fill="#dcdcdc" opacity="0.5"/><rect x="30.02" y="101.54" width="0.50" height="1.4" fill="#dcdcdc" opacity="0.5"/><rect x="30.38" y="101.54" width="1.41" height="1.4" fill="#569cd6" opacity="0.8"/><rect x="32.14" y="101.54" width="0.50" height="1.4" fill="#b8d7a3" opacity="0.5"/><rect x="32.49" y="101.54" width="0.50" height="1.4" fill="#dcdcdc" opacity="0.5"/><rect x="32.84" y="101.54" width="0.50" height="1.4" fill="#dcdcdc" opacity="0.5"/><rect x="33.54" y="101.54" width="1.76" height="1.4" fill="#9cdcfe" opacity="0.8"/><rect x="35.30" y="101.54" width="0.50" height="1.4" fill="#dcdcdc" opacity="0.5"/><rect x="36.01" y="101.54" width="0.70" height="1.4" fill="#b4b4b4" opacity="0.5"/><rect x="37.06" y="101.54" width="1.76" height="1.4" fill="#9cdcfe" opacity="0.8"/><rect x="39.18" y="101.54" width="0.70" height="1.4" fill="#b4b4b4" opacity="0.5"/><rect x="40.23" y="101.54" width="1.41" height="1.4" fill="#569cd6" opacity="0.8"/><rect x="41.99" y="101.54" width="0.70" height="1.4" fill="#b4b4b4" opacity="0.5"/><rect x="43.05" y="101.54" width="1.76" height="1.4" fill="#9cdcfe" opacity="0.8"/><rect x="44.81" y="101.54" width="0.50" height="1.4" fill="#b4b4b4" opacity="0.5"/><rect x="45.16" y="101.54" width="2.11" height="1.4" fill="#dcdcdc" opacity="0.8"/><rect x="47.62" y="101.54" width="0.50" height="1.4" fill="#b4b4b4" opacity="0.5"/><rect x="48.33" y="101.54" width="0.50" height="1.4" fill="#b5cea8" opacity="0.5"/><rect x="48.68" y="101.54" width="0.50" height="1.4" fill="#dcdcdc" opacity="0.5"/><rect x="19.82" y="123.17" width="2.11" height="1.4" fill="#569cd6" opacity="0.8"/><rect x="22.28" y="123.17" width="2.11" height="1.4" fill="#569cd6" opacity="0.8"/><rect x="24.74" y="123.17" width="0.50" height="1.4" fill="#b8d7a3" opacity="0.5"/><rect x="25.45" y="123.17" width="3.17" height="1.4" fill="#dcdcaa" opacity="0.8"/><rect x="28.62" y="123.17" width="0.50" height="1.4" fill="#dcdcdc" opacity="0.5"/><rect x="28.97" y="123.17" width="0.50" height="1.4" fill="#b8d7a3" opacity="0.5"/><rect x="29.32" y="123.17" width="0.50" height="1.4" fill="#dcdcdc" opacity="0.5"/><rect x="29.67" y="123.17" width="0.50" height="1.4" fill="#dcdcdc" opacity="0.5"/><rect x="30.02" y="123.17" width="1.41" height="1.4" fill="#569cd6" opacity="0.8"/><rect x="31.78" y="123.17" width="0.50" height="1.4" fill="#b8d7a3" opacity="0.5"/><rect x="32.14" y="123.17" width="0.50" height="1.4" fill="#dcdcdc" opacity="0.5"/><rect x="32.49" y="123.17" width="0.50" height="1.4" fill="#dcdcdc" opacity="0.5"/><rect x="33.19" y="123.17" width="1.76" height="1.4" fill="#9cdcfe" opacity="0.8"/><rect x="34.95" y="123.17" width="0.50" height="1.4" fill="#dcdcdc" opacity="0.5"/><rect x="35.66" y="123.17" width="0.70" height="1.4" fill="#b4b4b4" opacity="0.5"/><rect x="36.71" y="123.17" width="1.76" height="1.4" fill="#9cdcfe" opacity="0.8"/><rect x="38.47" y="123.17" width="0.50" height="1.4" fill="#dcdcdc" opacity="0.5"/><rect x="38.82" y="123.17" width="3.87" height="1.4" fill="#dcdcdc" opacity="0.8"/><rect x="42.70" y="123.17" width="0.50" height="1.4" fill="#b4b4b4" opacity="0.5"/><rect x="43.05" y="123.17" width="2.11" height="1.4" fill="#dcdcdc" opacity="0.8"/><rect x="45.16" y="123.17" width="0.50" height="1.4" fill="#b4b4b4" opacity="0.5"/><rect x="45.51" y="123.17" width="1.76" height="1.4" fill="#dcdcdc" opacity="0.8"/><rect x="47.27" y="123.17" width="0.50" height="1.4" fill="#dcdcdc" opacity="0.5"/><rect x="47.62" y="123.17" width="0.50" height="1.4" fill="#b5cea8" opacity="0.5"/><rect x="47.98" y="123.17" width="0.50" height="1.4" fill="#dcdcdc" opacity="0.5"/><rect x="48.68" y="123.17" width="0.50" height="1.4" fill="#9cdcfe" opacity="0.8"/><rect x="19.82" y="144.80" width="2.11" height="1.4" fill="#569cd6" opacity="0.8"/><rect x="22.28" y="144.80" width="2.11" height="1.4" fill="#569cd6" opacity="0.8"/><rect x="24.74" y="144.80" width="0.50" height="1.4" fill="#b8d7a3" opacity="0.5"/><rect x="25.45" y="144.80" width="6.34" height="1.4" fill="#dcdcaa" opacity="0.8"/><rect x="31.78" y="144.80" width="0.50" height="1.4" fill="#dcdcdc" opacity="0.5"/><rect x="32.14" y="144.80" width="0.50" height="1.4" fill="#b8d7a3" opacity="0.5"/><rect x="32.49" y="144.80" width="0.50" height="1.4" fill="#dcdcdc" opacity="0.5"/><rect x="32.84" y="144.80" width="0.50" height="1.4" fill="#dcdcdc" opacity="0.5"/><rect x="33.19" y="144.80" width="1.41" height="1.4" fill="#569cd6" opacity="0.8"/><rect x="34.95" y="144.80" width="0.50" height="1.4" fill="#b8d7a3" opacity="0.5"/><rect x="35.30" y="144.80" width="0.50" height="1.4" fill="#dcdcdc" opacity="0.5"/><rect x="35.66" y="144.80" width="0.50" height="1.4" fill="#dcdcdc" opacity="0.5"/><rect x="36.36" y="144.80" width="1.76" height="1.4" fill="#9cdcfe" opacity="0.8"/><rect x="38.12" y="144.80" width="0.50" height="1.4" fill="#dcdcdc" opacity="0.5"/><rect x="38.82" y="144.80" width="1.06" height="1.4" fill="#569cd6" opacity="0.8"/><rect x="40.23" y="144.80" width="1.76" height="1.4" fill="#9cdcfe" opacity="0.8"/><rect x="41.99" y="144.80" width="0.50" height="1.4" fill="#dcdcdc" opacity="0.5"/><rect x="42.70" y="144.80" width="1.76" height="1.4" fill="#569cd6" opacity="0.8"/><rect x="44.81" y="144.80" width="0.50" height="1.4" fill="#b8d7a3" opacity="0.5"/><rect x="45.51" y="144.80" width="0.50" height="1.4" fill="#b4b4b4" opacity="0.5"/><rect x="46.22" y="144.80" width="2.78" height="1.4" fill="#dcdcdc" opacity="0.8"/><rect x="19.82" y="155.62" width="0.50" height="1.4" fill="#dcdcdc" opacity="0.5"/><rect x="21.22" y="166.43" width="0.70" height="1.4" fill="#d8a0df" opacity="0.5"/><rect x="22.28" y="166.43" width="0.50" height="1.4" fill="#dcdcdc" opacity="0.5"/><rect x="22.63" y="166.43" width="1.76" height="1.4" fill="#9cdcfe" opacity="0.8"/><rect x="24.39" y="166.43" width="0.50" height="1.4" fill="#b4b4b4" opacity="0.5"/><rect x="24.74" y="166.43" width="4.22" height="1.4" fill="#dcdcaa" opacity="0.8"/><rect x="28.97" y="166.43" width="0.50" height="1.4" fill="#dcdcdc" opacity="0.5"/><rect x="29.32" y="166.43" width="1.76" height="1.4" fill="#9cdcfe" opacity="0.8"/><rect x="31.08" y="166.43" width="0.50" height="1.4" fill="#dcdcdc" opacity="0.5"/><rect x="31.43" y="166.43" width="0.50" height="1.4" fill="#dcdcdc" opacity="0.5"/><rect x="21.22" y="177.25" width="0.50" height="1.4" fill="#dcdcdc" opacity="0.5"/><rect x="22.63" y="188.06" width="1.76" height="1.4" fill="#dcdcdc" opacity="0.8"/><rect x="24.39" y="188.06" width="0.50" height="1.4" fill="#b4b4b4" opacity="0.5"/><rect x="24.74" y="188.06" width="2.46" height="1.4" fill="#dcdcdc" opacity="0.8"/><rect x="27.21" y="188.06" width="0.50" height="1.4" fill="#dcdcdc" opacity="0.5"/><rect x="27.56" y="188.06" width="1.76" height="1.4" fill="#9cdcfe" opacity="0.8"/><rect x="29.32" y="188.06" width="0.50" height="1.4" fill="#dcdcdc" opacity="0.5"/><rect x="30.02" y="188.06" width="1.06" height="1.4" fill="#9cdcfe" opacity="0.8"/><rect x="31.43" y="188.06" width="0.70" height="1.4" fill="#b4b4b4" opacity="0.5"/><rect x="32.49" y="188.06" width="1.06" height="1.4" fill="#9cdcfe" opacity="0.8"/><rect x="33.54" y="188.06" width="0.50" height="1.4" fill="#b4b4b4" opacity="0.5"/><rect x="33.90" y="188.06" width="3.52" height="1.4" fill="#dcdcdc" opacity="0.8"/><rect x="37.42" y="188.06" width="0.50" height="1.4" fill="#b4b4b4" opacity="0.5"/><rect x="37.77" y="188.06" width="3.17" height="1.4" fill="#dcdcdc" opacity="0.8"/><rect x="40.94" y="188.06" width="0.50" height="1.4" fill="#dcdcdc" opacity="0.5"/><rect x="41.29" y="188.06" width="1.76" height="1.4" fill="#569cd6" opacity="0.8"/><rect x="43.05" y="188.06" width="0.50" height="1.4" fill="#dcdcdc" opacity="0.5"/><rect x="43.40" y="188.06" width="0.50" height="1.4" fill="#dcdcdc" opacity="0.5"/><rect x="43.75" y="188.06" width="0.50" height="1.4" fill="#dcdcdc" opacity="0.5"/><rect x="22.63" y="198.88" width="1.06" height="1.4" fill="#569cd6" opacity="0.8"/><rect x="24.04" y="198.88" width="3.17" height="1.4" fill="#9cdcfe" opacity="0.8"/><rect x="27.56" y="198.88" width="0.50" height="1.4" fill="#b4b4b4" opacity="0.5"/><rect x="28.26" y="198.88" width="1.76" height="1.4" fill="#9cdcfe" opacity="0.8"/><rect x="30.02" y="198.88" width="0.50" height="1.4" fill="#dcdcdc" opacity="0.5"/><rect x="30.38" y="198.88" width="1.76" height="1.4" fill="#9cdcfe" opacity="0.8"/><rect x="32.14" y="198.88" width="0.50" height="1.4" fill="#dcdcdc" opacity="0.5"/><rect x="32.49" y="198.88" width="0.50" height="1.4" fill="#dcdcdc" opacity="0.5"/><rect x="22.63" y="209.69" width="0.70" height="1.4" fill="#d8a0df" opacity="0.5"/><rect x="23.69" y="209.69" width="0.50" height="1.4" fill="#dcdcdc" opacity="0.5"/><rect x="24.04" y="209.69" width="3.17" height="1.4" fill="#9cdcfe" opacity="0.8"/><rect x="27.56" y="209.69" width="0.70" height="1.4" fill="#b4b4b4" opacity="0.5"/><rect x="28.62" y="209.69" width="1.41" height="1.4" fill="#569cd6" opacity="0.8"/><rect x="30.02" y="209.69" width="0.50" height="1.4" fill="#dcdcdc" opacity="0.5"/><rect x="30.73" y="209.69" width="3.17" height="1.4" fill="#9cdcfe" opacity="0.8"/><rect x="33.90" y="209.69" width="0.50" height="1.4" fill="#b4b4b4" opacity="0.5"/><rect x="34.25" y="209.69" width="3.52" height="1.4" fill="#dcdcdc" opacity="0.8"/><rect x="37.77" y="209.69" width="0.50" height="1.4" fill="#b4b4b4" opacity="0.5"/><rect x="38.12" y="209.69" width="3.17" height="1.4" fill="#dcdcdc" opacity="0.8"/><rect x="41.29" y="209.69" width="0.50" height="1.4" fill="#dcdcdc" opacity="0.5"/><rect x="41.64" y="209.69" width="1.41" height="1.4" fill="#569cd6" opacity="0.8"/><rect x="43.05" y="209.69" width="0.50" height="1.4" fill="#dcdcdc" opacity="0.5"/><rect x="43.40" y="209.69" width="0.50" height="1.4" fill="#dcdcdc" opacity="0.5"/><rect x="22.63" y="220.51" width="2.11" height="1.4" fill="#d8a0df" opacity="0.8"/><rect x="25.10" y="220.51" width="3.17" height="1.4" fill="#9cdcfe" opacity="0.8"/><rect x="28.26" y="220.51" width="0.50" height="1.4" fill="#dcdcdc" opacity="0.5"/><rect x="21.22" y="231.32" width="0.50" height="1.4" fill="#dcdcdc" opacity="0.5"/><rect x="21.22" y="242.14" width="2.11" height="1.4" fill="#d8a0df" opacity="0.8"/><rect x="23.69" y="242.14" width="1.41" height="1.4" fill="#569cd6" opacity="0.8"/><rect x="25.10" y="242.14" width="0.50" height="1.4" fill="#dcdcdc" opacity="0.5"/><rect x="19.82" y="252.95" width="0.50" height="1.4" fill="#dcdcdc" opacity="0.5"/><rect x="18.41" y="263.77" width="0.50" height="1.4" fill="#dcdcdc" opacity="0.5"/><rect x="17.00" y="274.58" width="0.50" height="1.4" fill="#dcdcdc" opacity="0.5"/><rect x="0" y="284" width="50" height="2" fill="#f4f4f4"/></svg>
<div class="a" style="left:949px;top:115px;width:940px;height:880px;background:#1e1e1e;"></div>
<div class="a" style="left:947.5px;top:115px;width:17.8px;height:880px;background:#333333;"></div>
<div class="clip" style="left:949px;top:115px;width:890px;height:880px;">
<div class="a" style="left:119px;top:527.5px;width:772px;height:17.5px;border:2px solid #414141;"></div>
<div class="a" style="left:124.00px;top:87px;width:1px;height:797px;background:repeating-linear-gradient(to bottom,#6a6a6a 0,#6a6a6a 3px,transparent 3px,transparent 4px);"></div>
<div class="a" style="left:155.00px;top:121px;width:1px;height:763px;background:repeating-linear-gradient(to bottom,#6a6a6a 0,#6a6a6a 3px,transparent 3px,transparent 4px);"></div>
<div class="a" style="left:186.00px;top:495px;width:1px;height:117px;background:repeating-linear-gradient(to bottom,#6a6a6a 0,#6a6a6a 3px,transparent 3px,transparent 4px);"></div>
<div class="a" style="left:216.00px;top:580px;width:1px;height:15px;background:repeating-linear-gradient(to bottom,#6a6a6a 0,#6a6a6a 3px,transparent 3px,transparent 4px);"></div>
<div class="a" style="left:186.00px;top:682px;width:1px;height:49px;background:repeating-linear-gradient(to bottom,#6a6a6a 0,#6a6a6a 3px,transparent 3px,transparent 4px);"></div>
<div class="a" style="left:106px;top:67px;width:1px;height:815px;background:#777777;"></div>
<div class="a" style="left:106px;top:611px;width:5px;height:1px;background:#777777;"></div>
<div class="a" style="left:106px;top:628px;width:5px;height:1px;background:#777777;"></div>
<div class="a" style="left:106px;top:747px;width:5px;height:1px;background:#777777;"></div>
<svg class="a" style="left:100.5px;top:56px;background:#1e1e1e" width="12" height="9" viewBox="0 0 12 9"><path d="M1.5 2 L6 6.5 L10.5 2" fill="none" stroke="#d0d0d0" stroke-width="1.2"/></svg>
<svg class="a" style="left:100.5px;top:90px;background:#1e1e1e" width="12" height="9" viewBox="0 0 12 9"><path d="M1.5 2 L6 6.5 L10.5 2" fill="none" stroke="#d0d0d0" stroke-width="1.2"/></svg>
<svg class="a" style="left:100.5px;top:464px;background:#1e1e1e" width="12" height="9" viewBox="0 0 12 9"><path d="M1.5 2 L6 6.5 L10.5 2" fill="none" stroke="#d0d0d0" stroke-width="1.2"/></svg>
<svg class="a" style="left:100.5px;top:549px;background:#1e1e1e" width="12" height="9" viewBox="0 0 12 9"><path d="M1.5 2 L6 6.5 L10.5 2" fill="none" stroke="#d0d0d0" stroke-width="1.2"/></svg>
<svg class="a" style="left:100.5px;top:651px;background:#1e1e1e" width="12" height="9" viewBox="0 0 12 9"><path d="M1.5 2 L6 6.5 L10.5 2" fill="none" stroke="#d0d0d0" stroke-width="1.2"/></svg>
<div class="ln" style="left:13.5px;top:0px;">1</div>
<div class="code" style="left:121px;top:0px;"><span class="cm">// Weapon.cs</span></div>
<div class="ln" style="left:13.5px;top:17px;">2</div>
<div class="code" style="left:121px;top:17px;"><span class="k">using</span> UnityEngine;</div>
<div class="ln" style="left:13.5px;top:34px;">3</div>
<div class="ln" style="left:13.5px;top:51px;">4</div>
<div class="code" style="left:121px;top:51px;"><span class="k">namespace</span> FPS<span class="o">.</span>Game</div>
<div class="ln" style="left:13.5px;top:68px;">5</div>
<div class="code" style="left:121px;top:68px;">{</div>
<div class="ln" style="left:13.5px;top:85px;">6</div>
<div class="code" style="left:121px;top:85px;">    <span class="k">public</span> <span class="k">class</span> <span class="ty">Weapon</span> <span class="o">:</span> MonoBehaviour</div>
<div class="ln" style="left:13.5px;top:102px;">7</div>
<div class="code" style="left:121px;top:102px;">    {</div>
<div class="ln" style="left:13.5px;top:119px;">8</div>
<div class="code" style="left:121px;top:119px;">        [SerializeField] <span class="k">private</span> <span class="k">bool</span> automatic;</div>
<div class="ln" style="left:13.5px;top:136px;">9</div>
<div class="code" style="left:121px;top:136px;">        [SerializeField] <span class="k">private</span> <span class="k">float</span> projectileImpulse <span class="o">=</span> <span class="n">400.0f</span>;</div>
<div class="ln" style="left:13.5px;top:153px;">10</div>
<div class="code" style="left:121px;top:153px;">        [SerializeField] <span class="k">private</span> <span class="k">int</span> roundsPerMinutes <span class="o">=</span> <span class="n">200</span>;</div>
<div class="ln" style="left:13.5px;top:170px;">11</div>
<div class="code" style="left:121px;top:170px;">        [SerializeField] <span class="k">private</span> LayerMask mask;</div>
<div class="ln" style="left:13.5px;top:187px;">12</div>
<div class="code" style="left:121px;top:187px;">        [SerializeField] <span class="k">private</span> <span class="k">float</span> maximumDistance <span class="o">=</span> <span class="n">500.0f</span>;</div>
<div class="ln" style="left:13.5px;top:204px;">13</div>
<div class="code" style="left:121px;top:204px;">        [SerializeField] <span class="k">private</span> Transform socketEjection;</div>
<div class="ln" style="left:13.5px;top:221px;">14</div>
<div class="code" style="left:121px;top:221px;">        [SerializeField] <span class="k">private</span> GameObject prefabCasing;</div>
<div class="ln" style="left:13.5px;top:238px;">15</div>
<div class="code" style="left:121px;top:238px;">        [SerializeField] <span class="k">private</span> GameObject prefabProjectile;</div>
<div class="ln" style="left:13.5px;top:255px;">16</div>
<div class="code" style="left:121px;top:255px;">        [SerializeField] <span class="k">private</span> RuntimeAnimatorController controller;</div>
<div class="ln" style="left:13.5px;top:272px;">17</div>
<div class="code" style="left:121px;top:272px;">        [SerializeField] <span class="k">private</span> Sprite spriteBody;</div>
<div class="ln" style="left:13.5px;top:289px;">18</div>
<div class="code" style="left:121px;top:289px;">        [SerializeField] <span class="k">private</span> AudioClip audioClipHolster, audioClipUnholster, audioClipReload, audioClipReloadEmpty, audioClipFireEmpty;</div>
<div class="ln" style="left:13.5px;top:306px;">19</div>
<div class="ln" style="left:13.5px;top:323px;">20</div>
<div class="code" style="left:121px;top:323px;">        <span class="k">private</span> Animator animator;</div>
<div class="ln" style="left:13.5px;top:340px;">21</div>
<div class="code" style="left:121px;top:340px;">        <span class="k">private</span> WeaponAttachmentManager attachmentManager;</div>
<div class="ln" style="left:13.5px;top:357px;">22</div>
<div class="code" style="left:121px;top:357px;">        <span class="k">private</span> <span class="k">int</span> ammunitionCurrent;</div>
<div class="ln" style="left:13.5px;top:374px;">23</div>
<div class="code" style="left:121px;top:374px;">        <span class="k">private</span> Magazine magazine;</div>
<div class="ln" style="left:13.5px;top:391px;">24</div>
<div class="code" style="left:121px;top:391px;">        <span class="k">private</span> Muzzle muzzle;</div>
<div class="ln" style="left:13.5px;top:408px;">25</div>
<div class="code" style="left:121px;top:408px;">        <span class="k">private</span> Character characterBehaviour;</div>
<div class="ln" style="left:13.5px;top:425px;">26</div>
<div class="code" style="left:121px;top:425px;">        <span class="k">private</span> Transform playerCamera;</div>
<div class="ln" style="left:13.5px;top:442px;">27</div>
<div class="ln" style="left:13.5px;top:459px;">28</div>
<div class="code" style="left:121px;top:459px;">        <span class="k">protected</span> <span class="k">virtual</span> <span class="k">void</span> <span class="m">Awake</span>()</div>
<div class="ln" style="left:13.5px;top:476px;">29</div>
<div class="code" style="left:121px;top:476px;">        {</div>
<div class="ln" style="left:13.5px;top:493px;">30</div>
<div class="code" style="left:121px;top:493px;">            animator <span class="o">=</span> GetComponent&lt;Animator&gt;();</div>
<div class="ln" style="left:13.5px;top:510px;">31</div>
<div class="code" style="left:121px;top:510px;">            attachmentManager <span class="o">=</span> GetComponent&lt;WeaponAttachmentManager&gt;();</div>
<div class="ln" style="left:13.5px;top:527px;color:#ffffff;font-weight:bold;">32</div>
<div class="code" style="left:121px;top:527px;">            characterBehaviour <span class="o">=</span> Object<span class="o">.</span>FindFirstObjectByType&lt;Character&gt;();</div>
<div class="ln" style="left:13.5px;top:544px;">33</div>
<div class="code" style="left:121px;top:544px;">            <span class="c">if</span> (characterBehaviour <span class="o">!=</span> <span class="k">null</span>)</div>
<div class="ln" style="left:13.5px;top:561px;">34</div>
<div class="code" style="left:121px;top:561px;">            {</div>
<div class="ln" style="left:13.5px;top:578px;">35</div>
<div class="code" style="left:121px;top:578px;">                playerCamera <span class="o">=</span> characterBehaviour<span class="o">.</span>GetCameraWorld()<span class="o">.</span>transform;</div>
<div class="ln" style="left:13.5px;top:595px;">36</div>
<div class="code" style="left:121px;top:595px;">            }</div>
<div class="ln" style="left:13.5px;top:612px;">37</div>
<div class="code" style="left:121px;top:612px;">        }</div>
<div class="ln" style="left:13.5px;top:629px;">38</div>
<div class="ln" style="left:13.5px;top:646px;">39</div>
<div class="code" style="left:121px;top:646px;">        <span class="k">protected</span> <span class="k">virtual</span> <span class="k">void</span> <span class="m">Start</span>()</div>
<div class="ln" style="left:13.5px;top:663px;">40</div>
<div class="code" style="left:121px;top:663px;">        {</div>
<div class="ln" style="left:13.5px;top:680px;">41</div>
<div class="code" style="left:121px;top:680px;">            magazine <span class="o">=</span> attachmentManager<span class="o">.</span>GetEquippedMagazine();</div>
<div class="ln" style="left:13.5px;top:697px;">42</div>
<div class="code" style="left:121px;top:697px;">            muzzle <span class="o">=</span> attachmentManager<span class="o">.</span>GetEquippedMuzzle();</div>
<div class="ln" style="left:13.5px;top:714px;">43</div>
<div class="code" style="left:121px;top:714px;">            ammunitionCurrent <span class="o">=</span> magazine <span class="o">!=</span> <span class="k">null</span> <span class="o">?</span> magazine<span class="o">.</span>GetAmmunitionTotal() <span class="o">:</span> <span class="n">0</span>;</div>
<div class="ln" style="left:13.5px;top:731px;">44</div>
<div class="code" style="left:121px;top:731px;">        }</div>
<div class="ln" style="left:13.5px;top:748px;">45</div>
<div class="ln" style="left:13.5px;top:765px;">46</div>
<div class="code" style="left:121px;top:765px;">        <span class="k">public</span> Sprite <span class="m">GetSpriteBody</span>() <span class="o">=&gt;</span> spriteBody;</div>
<div class="ln" style="left:13.5px;top:782px;">47</div>
<div class="code" style="left:121px;top:782px;">        <span class="k">public</span> AudioClip <span class="m">GetAudioClipHolster</span>() <span class="o">=&gt;</span> audioClipHolster;</div>
<div class="ln" style="left:13.5px;top:799px;">48</div>
<div class="code" style="left:121px;top:799px;">        <span class="k">public</span> AudioClip <span class="m">GetAudioClipUnholster</span>() <span class="o">=&gt;</span> audioClipUnholster;</div>
<div class="ln" style="left:13.5px;top:816px;">49</div>
<div class="code" style="left:121px;top:816px;">        <span class="k">public</span> AudioClip <span class="m">GetAudioClipReload</span>() <span class="o">=&gt;</span> audioClipReload;</div>
<div class="ln" style="left:13.5px;top:833px;">50</div>
<div class="code" style="left:121px;top:833px;">        <span class="k">public</span> AudioClip <span class="m">GetAudioClipReloadEmpty</span>() <span class="o">=&gt;</span> audioClipReloadEmpty;</div>
<div class="ln" style="left:13.5px;top:850px;">51</div>
<div class="code" style="left:121px;top:850px;">        <span class="k">public</span> AudioClip <span class="m">GetAudioClipFireEmpty</span>() <span class="o">=&gt;</span> audioClipFireEmpty;</div>
<div class="ln" style="left:13.5px;top:867px;">52</div>
<div class="code" style="left:121px;top:867px;">        <span class="k">public</span> AudioClip <span class="m">GetAudioClipFire</span>() <span class="o">=&gt;</span> muzzle<span class="o">.</span>GetAudioClipFire();</div>
</div>
<div class="a" style="left:1839px;top:115px;width:50px;height:880px;background:#3e3e42;"></div>
<svg class="a" style="left:1858.5px;top:119px;" width="11" height="7" viewBox="0 0 11 7"><path d="M0.5 6.5 L5.5 1 L10.5 6.5 Z" fill="#9a9a9a"/></svg>
<svg class="a" style="left:1858.5px;top:984px;" width="11" height="7" viewBox="0 0 11 7"><path d="M0.5 0.5 L5.5 6 L10.5 0.5 Z" fill="#9a9a9a"/></svg>
<svg class="a" style="left:1839px;top:130px;" width="49.5" height="593" viewBox="0 0 49.5 593"><rect x="0.5" y="0.5" width="49" height="257.0" rx="2.5" fill="#000000" stroke="#8a8a8a" stroke-width="1"/><rect x="17.00" y="2.15" width="4.22" height="1.5" fill="#57a64a" opacity="0.8"/><rect x="17.00" y="7.15" width="1.76" height="1.5" fill="#569cd6" opacity="0.8"/><rect x="19.11" y="7.15" width="3.87" height="1.5" fill="#dcdcdc" opacity="0.8"/><rect x="22.98" y="7.15" width="0.50" height="1.5" fill="#dcdcdc" opacity="0.5"/><rect x="17.00" y="17.15" width="3.17" height="1.5" fill="#569cd6" opacity="0.8"/><rect x="20.52" y="17.15" width="1.06" height="1.5" fill="#dcdcdc" opacity="0.8"/><rect x="21.58" y="17.15" width="0.50" height="1.5" fill="#b4b4b4" opacity="0.5"/><rect x="21.93" y="17.15" width="1.41" height="1.5" fill="#dcdcdc" opacity="0.8"/><rect x="17.00" y="22.15" width="0.50" height="1.5" fill="#dcdcdc" opacity="0.5"/><rect x="18.41" y="27.15" width="2.11" height="1.5" fill="#569cd6" opacity="0.8"/><rect x="20.87" y="27.15" width="1.76" height="1.5" fill="#569cd6" opacity="0.8"/><rect x="22.98" y="27.15" width="2.11" height="1.5" fill="#4ec9b0" opacity="0.8"/><rect x="25.45" y="27.15" width="0.50" height="1.5" fill="#b4b4b4" opacity="0.5"/><rect x="26.15" y="27.15" width="4.58" height="1.5" fill="#dcdcdc" opacity="0.8"/><rect x="18.41" y="32.15" width="0.50" height="1.5" fill="#dcdcdc" opacity="0.5"/><rect x="19.82" y="37.15" width="0.50" height="1.5" fill="#dcdcdc" opacity="0.5"/><rect x="20.17" y="37.15" width="4.93" height="1.5" fill="#dcdcdc" opacity="0.8"/><rect x="25.10" y="37.15" width="0.50" height="1.5" fill="#dcdcdc" opacity="0.5"/><rect x="25.80" y="37.15" width="2.46" height="1.5" fill="#569cd6" opacity="0.8"/><rect x="28.62" y="37.15" width="1.41" height="1.5" fill="#569cd6" opacity="0.8"/><rect x="30.38" y="37.15" width="3.17" height="1.5" fill="#dcdcdc" opacity="0.8"/><rect x="33.54" y="37.15" width="0.50" height="1.5" fill="#dcdcdc" opacity="0.5"/><rect x="19.82" y="42.15" width="0.50" height="1.5" fill="#dcdcdc" opacity="0.5"/><rect x="20.17" y="42.15" width="4.93" height="1.5" fill="#dcdcdc" opacity="0.8"/><rect x="25.10" y="42.15" width="0.50" height="1.5" fill="#dcdcdc" opacity="0.5"/><rect x="25.80" y="42.15" width="2.46" height="1.5" fill="#569cd6" opacity="0.8"/><rect x="28.62" y="42.15" width="1.76" height="1.5" fill="#569cd6" opacity="0.8"/><rect x="30.73" y="42.15" width="5.98" height="1.5" fill="#dcdcdc" opacity="0.8"/><rect x="37.06" y="42.15" width="0.50" height="1.5" fill="#b4b4b4" opacity="0.5"/><rect x="37.77" y="42.15" width="2.11" height="1.5" fill="#b5cea8" opacity="0.8"/><rect x="39.88" y="42.15" width="0.50" height="1.5" fill="#dcdcdc" opacity="0.5"/><rect x="19.82" y="47.15" width="0.50" height="1.5" fill="#dcdcdc" opacity="0.5"/><rect x="20.17" y="47.15" width="4.93" height="1.5" fill="#dcdcdc" opacity="0.8"/><rect x="25.10" y="47.15" width="0.50" height="1.5" fill="#dcdcdc" opacity="0.5"/><rect x="25.80" y="47.15" width="2.46" height="1.5" fill="#569cd6" opacity="0.8"/><rect x="28.62" y="47.15" width="1.06" height="1.5" fill="#569cd6" opacity="0.8"/><rect x="30.02" y="47.15" width="5.63" height="1.5" fill="#dcdcdc" opacity="0.8"/><rect x="36.01" y="47.15" width="0.50" height="1.5" fill="#b4b4b4" opacity="0.5"/><rect x="36.71" y="47.15" width="1.06" height="1.5" fill="#b5cea8" opacity="0.8"/><rect x="37.77" y="47.15" width="0.50" height="1.5" fill="#dcdcdc" opacity="0.5"/><rect x="19.82" y="52.15" width="0.50" height="1.5" fill="#dcdcdc" opacity="0.5"/><rect x="20.17" y="52.15" width="4.93" height="1.5" fill="#dcdcdc" opacity="0.8"/><rect x="25.10" y="52.15" width="0.50" height="1.5" fill="#dcdcdc" opacity="0.5"/><rect x="25.80" y="52.15" width="2.46" height="1.5" fill="#569cd6" opacity="0.8"/><rect x="28.62" y="52.15" width="3.17" height="1.5" fill="#dcdcdc" opacity="0.8"/><rect x="32.14" y="52.15" width="1.41" height="1.5" fill="#dcdcdc" opacity="0.8"/><rect x="33.54" y="52.15" width="0.50" height="1.5" fill="#dcdcdc" opacity="0.5"/><rect x="19.82" y="57.15" width="0.50" height="1.5" fill="#dcdcdc" opacity="0.5"/><rect x="20.17" y="57.15" width="4.93" height="1.5" fill="#dcdcdc" opacity="0.8"/><rect x="25.10" y="57.15" width="0.50" height="1.5" fill="#dcdcdc" opacity="0.5"/><rect x="25.80" y="57.15" width="2.46" height="1.5" fill="#569cd6" opacity="0.8"/><rect x="28.62" y="57.15" width="1.76" height="1.5" fill="#569cd6" opacity="0.8"/><rect x="30.73" y="57.15" width="5.28" height="1.5" fill="#dcdcdc" opacity="0.8"/><rect x="36.36" y="57.15" width="0.50" height="1.5" fill="#b4b4b4" opacity="0.5"/><rect x="37.06" y="57.15" width="2.11" height="1.5" fill="#b5cea8" opacity="0.8"/><rect x="39.18" y="57.15" width="0.50" height="1.5" fill="#dcdcdc" opacity="0.5"/><rect x="19.82" y="62.15" width="0.50" height="1.5" fill="#dcdcdc" opacity="0.5"/><rect x="20.17" y="62.15" width="4.93" height="1.5" fill="#dcdcdc" opacity="0.8"/><rect x="25.10" y="62.15" width="0.50" height="1.5" fill="#dcdcdc" opacity="0.5"/><rect x="25.80" y="62.15" width="2.46" height="1.5" fill="#569cd6" opacity="0.8"/><rect x="28.62" y="62.15" width="3.17" height="1.5" fill="#dcdcdc" opacity="0.8"/><rect x="32.14" y="62.15" width="4.93" height="1.5" fill="#dcdcdc" opacity="0.8"/><rect x="37.06" y="62.15" width="0.50" height="1.5" fill="#dcdcdc" opacity="0.5"/><rect x="19.82" y="67.15" width="0.50" height="1.5" fill="#dcdcdc" opacity="0.5"/><rect x="20.17" y="67.15" width="4.93" height="1.5" fill="#dcdcdc" opacity="0.8"/><rect x="25.10" y="67.15" width="0.50" height="1.5" fill="#dcdcdc" opacity="0.5"/><rect x="25.80" y="67.15" width="2.46" height="1.5" fill="#569cd6" opacity="0.8"/><rect x="28.62" y="67.15" width="3.52" height="1.5" fill="#dcdcdc" opacity="0.8"/><rect x="32.49" y="67.15" width="4.22" height="1.5" fill="#dcdcdc" opacity="0.8"/><rect x="36.71" y="67.15" width="0.50" height="1.5" fill="#dcdcdc" opacity="0.5"/><rect x="19.82" y="72.15" width="0.50" height="1.5" fill="#dcdcdc" opacity="0.5"/><rect x="20.17" y="72.15" width="4.93" height="1.5" fill="#dcdcdc" opacity="0.8"/><rect x="25.10" y="72.15" width="0.50" height="1.5" fill="#dcdcdc" opacity="0.5"/><rect x="25.80" y="72.15" width="2.46" height="1.5" fill="#569cd6" opacity="0.8"/><rect x="28.62" y="72.15" width="3.52" height="1.5" fill="#dcdcdc" opacity="0.8"/><rect x="32.49" y="72.15" width="5.63" height="1.5" fill="#dcdcdc" opacity="0.8"/><rect x="38.12" y="72.15" width="0.50" height="1.5" fill="#dcdcdc" opacity="0.5"/><rect x="19.82" y="77.15" width="0.50" height="1.5" fill="#dcdcdc" opacity="0.5"/><rect x="20.17" y="77.15" width="4.93" height="1.5" fill="#dcdcdc" opacity="0.8"/><rect x="25.10" y="77.15" width="0.50" height="1.5" fill="#dcdcdc" opacity="0.5"/><rect x="25.80" y="77.15" width="2.46" height="1.5" fill="#569cd6" opacity="0.8"/><rect x="28.62" y="77.15" width="8.80" height="1.5" fill="#dcdcdc" opacity="0.8"/><rect x="37.77" y="77.15" width="3.52" height="1.5" fill="#dcdcdc" opacity="0.8"/><rect x="41.29" y="77.15" width="0.50" height="1.5" fill="#dcdcdc" opacity="0.5"/><rect x="19.82" y="82.15" width="0.50" height="1.5" fill="#dcdcdc" opacity="0.5"/><rect x="20.17" y="82.15" width="4.93" height="1.5" fill="#dcdcdc" opacity="0.8"/><rect x="25.10" y="82.15" width="0.50" height="1.5" fill="#dcdcdc" opacity="0.5"/><rect x="25.80" y="82.15" width="2.46" height="1.5" fill="#569cd6" opacity="0.8"/><rect x="28.62" y="82.15" width="2.11" height="1.5" fill="#dcdcdc" opacity="0.8"/><rect x="31.08" y="82.15" width="3.52" height="1.5" fill="#dcdcdc" opacity="0.8"/><rect x="34.60" y="82.15" width="0.50" height="1.5" fill="#dcdcdc" opacity="0.5"/><rect x="19.82" y="87.15" width="0.50" height="1.5" fill="#dcdcdc" opacity="0.5"/><rect x="20.17" y="87.15" width="4.93" height="1.5" fill="#dcdcdc" opacity="0.8"/><rect x="25.10" y="87.15" width="0.50" height="1.5" fill="#dcdcdc" opacity="0.5"/><rect x="25.80" y="87.15" width="2.46" height="1.5" fill="#569cd6" opacity="0.8"/><rect x="28.62" y="87.15" width="3.17" height="1.5" fill="#dcdcdc" opacity="0.8"/><rect x="32.14" y="87.15" width="5.63" height="1.5" fill="#dcdcdc" opacity="0.8"/><rect x="37.77" y="87.15" width="0.50" height="1.5" fill="#dcdcdc" opacity="0.5"/><rect x="38.47" y="87.15" width="6.34" height="1.5" fill="#dcdcdc" opacity="0.8"/><rect x="44.81" y="87.15" width="0.50" height="1.5" fill="#dcdcdc" opacity="0.5"/><rect x="45.51" y="87.15" width="3.49" height="1.5" fill="#dcdcdc" opacity="0.8"/><rect x="19.82" y="97.15" width="2.46" height="1.5" fill="#569cd6" opacity="0.8"/><rect x="22.63" y="97.15" width="2.82" height="1.5" fill="#dcdcdc" opacity="0.8"/><rect x="25.80" y="97.15" width="2.82" height="1.5" fill="#dcdcdc" opacity="0.8"/><rect x="28.62" y="97.15" width="0.50" height="1.5" fill="#dcdcdc" opacity="0.5"/><rect x="19.82" y="102.15" width="2.46" height="1.5" fill="#569cd6" opacity="0.8"/><rect x="22.63" y="102.15" width="8.10" height="1.5" fill="#dcdcdc" opacity="0.8"/><rect x="31.08" y="102.15" width="5.98" height="1.5" fill="#dcdcdc" opacity="0.8"/><rect x="37.06" y="102.15" width="0.50" height="1.5" fill="#dcdcdc" opacity="0.5"/><rect x="19.82" y="107.15" width="2.46" height="1.5" fill="#569cd6" opacity="0.8"/><rect x="22.63" y="107.15" width="1.06" height="1.5" fill="#569cd6" opacity="0.8"/><rect x="24.04" y="107.15" width="5.98" height="1.5" fill="#dcdcdc" opacity="0.8"/><rect x="30.02" y="107.15" width="0.50" height="1.5" fill="#dcdcdc" opacity="0.5"/><rect x="19.82" y="112.15" width="2.46" height="1.5" fill="#569cd6" opacity="0.8"/><rect x="22.63" y="112.15" width="2.82" height="1.5" fill="#dcdcdc" opacity="0.8"/><rect x="25.80" y="112.15" width="2.82" height="1.5" fill="#dcdcdc" opacity="0.8"/><rect x="28.62" y="112.15" width="0.50" height="1.5" fill="#dcdcdc" opacity="0.5"/><rect x="19.82" y="117.15" width="2.46" height="1.5" fill="#569cd6" opacity="0.8"/><rect x="22.63" y="117.15" width="2.11" height="1.5" fill="#dcdcdc" opacity="0.8"/><rect x="25.10" y="117.15" width="2.11" height="1.5" fill="#dcdcdc" opacity="0.8"/><rect x="27.21" y="117.15" width="0.50" height="1.5" fill="#dcdcdc" opacity="0.5"/><rect x="19.82" y="122.15" width="2.46" height="1.5" fill="#569cd6" opacity="0.8"/><rect x="22.63" y="122.15" width="3.17" height="1.5" fill="#dcdcdc" opacity="0.8"/><rect x="26.15" y="122.15" width="6.34" height="1.5" fill="#dcdcdc" opacity="0.8"/><rect x="32.49" y="122.15" width="0.50" height="1.5" fill="#dcdcdc" opacity="0.5"/><rect x="19.82" y="127.15" width="2.46" height="1.5" fill="#569cd6" opacity="0.8"/><rect x="22.63" y="127.15" width="3.17" height="1.5" fill="#dcdcdc" opacity="0.8"/><rect x="26.15" y="127.15" width="4.22" height="1.5" fill="#dcdcdc" opacity="0.8"/><rect x="30.38" y="127.15" width="0.50" height="1.5" fill="#dcdcdc" opacity="0.5"/><rect x="19.82" y="137.15" width="3.17" height="1.5" fill="#569cd6" opacity="0.8"/><rect x="23.34" y="137.15" width="2.46" height="1.5" fill="#569cd6" opacity="0.8"/><rect x="26.15" y="137.15" width="1.41" height="1.5" fill="#569cd6" opacity="0.8"/><rect x="27.91" y="137.15" width="1.76" height="1.5" fill="#dcdcaa" opacity="0.8"/><rect x="29.67" y="137.15" width="0.50" height="1.5" fill="#dcdcdc" opacity="0.5"/><rect x="30.02" y="137.15" width="0.50" height="1.5" fill="#dcdcdc" opacity="0.5"/><rect x="19.82" y="142.15" width="0.50" height="1.5" fill="#dcdcdc" opacity="0.5"/><rect x="21.22" y="147.15" width="2.82" height="1.5" fill="#dcdcdc" opacity="0.8"/><rect x="24.39" y="147.15" width="0.50" height="1.5" fill="#b4b4b4" opacity="0.5"/><rect x="25.10" y="147.15" width="4.22" height="1.5" fill="#dcdcdc" opacity="0.8"/><rect x="29.32" y="147.15" width="0.50" height="1.5" fill="#dcdcdc" opacity="0.5"/><rect x="29.67" y="147.15" width="2.82" height="1.5" fill="#dcdcdc" opacity="0.8"/><rect x="32.49" y="147.15" width="0.50" height="1.5" fill="#dcdcdc" opacity="0.5"/><rect x="32.84" y="147.15" width="0.50" height="1.5" fill="#dcdcdc" opacity="0.5"/><rect x="33.19" y="147.15" width="0.50" height="1.5" fill="#dcdcdc" opacity="0.5"/><rect x="33.54" y="147.15" width="0.50" height="1.5" fill="#dcdcdc" opacity="0.5"/><rect x="21.22" y="152.15" width="5.98" height="1.5" fill="#dcdcdc" opacity="0.8"/><rect x="27.56" y="152.15" width="0.50" height="1.5" fill="#b4b4b4" opacity="0.5"/><rect x="28.26" y="152.15" width="4.22" height="1.5" fill="#dcdcdc" opacity="0.8"/><rect x="32.49" y="152.15" width="0.50" height="1.5" fill="#dcdcdc" opacity="0.5"/><rect x="32.84" y="152.15" width="8.10" height="1.5" fill="#dcdcdc" opacity="0.8"/><rect x="40.94" y="152.15" width="0.50" height="1.5" fill="#dcdcdc" opacity="0.5"/><rect x="41.29" y="152.15" width="0.50" height="1.5" fill="#dcdcdc" opacity="0.5"/><rect x="41.64" y="152.15" width="0.50" height="1.5" fill="#dcdcdc" opacity="0.5"/><rect x="41.99" y="152.15" width="0.50" height="1.5" fill="#dcdcdc" opacity="0.5"/><rect x="21.22" y="157.15" width="6.34" height="1.5" fill="#dcdcdc" opacity="0.8"/><rect x="27.91" y="157.15" width="0.50" height="1.5" fill="#b4b4b4" opacity="0.5"/><rect x="28.62" y="157.15" width="2.11" height="1.5" fill="#dcdcdc" opacity="0.8"/><rect x="30.73" y="157.15" width="0.50" height="1.5" fill="#b4b4b4" opacity="0.5"/><rect x="31.08" y="157.15" width="7.39" height="1.5" fill="#dcdcdc" opacity="0.8"/><rect x="38.47" y="157.15" width="0.50" height="1.5" fill="#dcdcdc" opacity="0.5"/><rect x="38.82" y="157.15" width="3.17" height="1.5" fill="#dcdcdc" opacity="0.8"/><rect x="41.99" y="157.15" width="0.50" height="1.5" fill="#dcdcdc" opacity="0.5"/><rect x="42.34" y="157.15" width="0.50" height="1.5" fill="#dcdcdc" opacity="0.5"/><rect x="42.70" y="157.15" width="0.50" height="1.5" fill="#dcdcdc" opacity="0.5"/><rect x="43.05" y="157.15" width="0.50" height="1.5" fill="#dcdcdc" opacity="0.5"/><rect x="21.22" y="162.15" width="0.70" height="1.5" fill="#d8a0df" opacity="0.5"/><rect x="22.28" y="162.15" width="0.50" height="1.5" fill="#dcdcdc" opacity="0.5"/><rect x="22.63" y="162.15" width="6.34" height="1.5" fill="#dcdcdc" opacity="0.8"/><rect x="29.32" y="162.15" width="0.70" height="1.5" fill="#b4b4b4" opacity="0.5"/><rect x="30.38" y="162.15" width="1.41" height="1.5" fill="#569cd6" opacity="0.8"/><rect x="31.78" y="162.15" width="0.50" height="1.5" fill="#dcdcdc" opacity="0.5"/><rect x="21.22" y="167.15" width="0.50" height="1.5" fill="#dcdcdc" opacity="0.5"/><rect x="22.63" y="172.15" width="4.22" height="1.5" fill="#dcdcdc" opacity="0.8"/><rect x="27.21" y="172.15" width="0.50" height="1.5" fill="#b4b4b4" opacity="0.5"/><rect x="27.91" y="172.15" width="6.34" height="1.5" fill="#dcdcdc" opacity="0.8"/><rect x="34.25" y="172.15" width="0.50" height="1.5" fill="#b4b4b4" opacity="0.5"/><rect x="34.60" y="172.15" width="4.93" height="1.5" fill="#dcdcdc" opacity="0.8"/><rect x="39.53" y="172.15" width="0.50" height="1.5" fill="#dcdcdc" opacity="0.5"/><rect x="39.88" y="172.15" width="0.50" height="1.5" fill="#dcdcdc" opacity="0.5"/><rect x="40.23" y="172.15" width="0.50" height="1.5" fill="#b4b4b4" opacity="0.5"/><rect x="40.58" y="172.15" width="3.17" height="1.5" fill="#dcdcdc" opacity="0.8"/><rect x="43.75" y="172.15" width="0.50" height="1.5" fill="#dcdcdc" opacity="0.5"/><rect x="21.22" y="177.15" width="0.50" height="1.5" fill="#dcdcdc" opacity="0.5"/><rect x="19.82" y="182.15" width="0.50" height="1.5" fill="#dcdcdc" opacity="0.5"/><rect x="19.82" y="192.15" width="3.17" height="1.5" fill="#569cd6" opacity="0.8"/><rect x="23.34" y="192.15" width="2.46" height="1.5" fill="#569cd6" opacity="0.8"/><rect x="26.15" y="192.15" width="1.41" height="1.5" fill="#569cd6" opacity="0.8"/><rect x="27.91" y="192.15" width="1.76" height="1.5" fill="#dcdcaa" opacity="0.8"/><rect x="29.67" y="192.15" width="0.50" height="1.5" fill="#dcdcdc" opacity="0.5"/><rect x="30.02" y="192.15" width="0.50" height="1.5" fill="#dcdcdc" opacity="0.5"/><rect x="19.82" y="197.15" width="0.50" height="1.5" fill="#dcdcdc" opacity="0.5"/><rect x="21.22" y="202.15" width="2.82" height="1.5" fill="#dcdcdc" opacity="0.8"/><rect x="24.39" y="202.15" width="0.50" height="1.5" fill="#b4b4b4" opacity="0.5"/><rect x="25.10" y="202.15" width="5.98" height="1.5" fill="#dcdcdc" opacity="0.8"/><rect x="31.08" y="202.15" width="0.50" height="1.5" fill="#b4b4b4" opacity="0.5"/><rect x="31.43" y="202.15" width="6.69" height="1.5" fill="#dcdcdc" opacity="0.8"/><rect x="38.12" y="202.15" width="0.50" height="1.5" fill="#dcdcdc" opacity="0.5"/><rect x="38.47" y="202.15" width="0.50" height="1.5" fill="#dcdcdc" opacity="0.5"/><rect x="38.82" y="202.15" width="0.50" height="1.5" fill="#dcdcdc" opacity="0.5"/><rect x="21.22" y="207.15" width="2.11" height="1.5" fill="#dcdcdc" opacity="0.8"/><rect x="23.69" y="207.15" width="0.50" height="1.5" fill="#b4b4b4" opacity="0.5"/><rect x="24.39" y="207.15" width="5.98" height="1.5" fill="#dcdcdc" opacity="0.8"/><rect x="30.38" y="207.15" width="0.50" height="1.5" fill="#b4b4b4" opacity="0.5"/><rect x="30.73" y="207.15" width="5.98" height="1.5" fill="#dcdcdc" opacity="0.8"/><rect x="36.71" y="207.15" width="0.50" height="1.5" fill="#dcdcdc" opacity="0.5"/><rect x="37.06" y="207.15" width="0.50" height="1.5" fill="#dcdcdc" opacity="0.5"/><rect x="37.42" y="207.15" width="0.50" height="1.5" fill="#dcdcdc" opacity="0.5"/><rect x="21.22" y="212.15" width="5.98" height="1.5" fill="#dcdcdc" opacity="0.8"/><rect x="27.56" y="212.15" width="0.50" height="1.5" fill="#b4b4b4" opacity="0.5"/><rect x="28.26" y="212.15" width="2.82" height="1.5" fill="#dcdcdc" opacity="0.8"/><rect x="31.43" y="212.15" width="0.70" height="1.5" fill="#b4b4b4" opacity="0.5"/><rect x="32.49" y="212.15" width="1.41" height="1.5" fill="#569cd6" opacity="0.8"/><rect x="34.25" y="212.15" width="0.50" height="1.5" fill="#b4b4b4" opacity="0.5"/><rect x="34.95" y="212.15" width="2.82" height="1.5" fill="#dcdcdc" opacity="0.8"/><rect x="37.77" y="212.15" width="0.50" height="1.5" fill="#b4b4b4" opacity="0.5"/><rect x="38.12" y="212.15" width="6.34" height="1.5" fill="#dcdcdc" opacity="0.8"/><rect x="44.46" y="212.15" width="0.50" height="1.5" fill="#dcdcdc" opacity="0.5"/><rect x="44.81" y="212.15" width="0.50" height="1.5" fill="#dcdcdc" opacity="0.5"/><rect x="45.51" y="212.15" width="0.50" height="1.5" fill="#b4b4b4" opacity="0.5"/><rect x="46.22" y="212.15" width="0.50" height="1.5" fill="#b5cea8" opacity="0.5"/><rect x="46.57" y="212.15" width="0.50" height="1.5" fill="#dcdcdc" opacity="0.5"/><rect x="19.82" y="217.15" width="0.50" height="1.5" fill="#dcdcdc" opacity="0.5"/><rect x="19.82" y="227.15" width="2.11" height="1.5" fill="#569cd6" opacity="0.8"/><rect x="22.28" y="227.15" width="2.11" height="1.5" fill="#dcdcdc" opacity="0.8"/><rect x="24.74" y="227.15" width="4.58" height="1.5" fill="#dcdcaa" opacity="0.8"/><rect x="29.32" y="227.15" width="0.50" height="1.5" fill="#dcdcdc" opacity="0.5"/><rect x="29.67" y="227.15" width="0.50" height="1.5" fill="#dcdcdc" opacity="0.5"/><rect x="30.38" y="227.15" width="0.70" height="1.5" fill="#b4b4b4" opacity="0.5"/><rect x="31.43" y="227.15" width="3.52" height="1.5" fill="#dcdcdc" opacity="0.8"/><rect x="34.95" y="227.15" width="0.50" height="1.5" fill="#dcdcdc" opacity="0.5"/><rect x="19.82" y="232.15" width="2.11" height="1.5" fill="#569cd6" opacity="0.8"/><rect x="22.28" y="232.15" width="3.17" height="1.5" fill="#dcdcdc" opacity="0.8"/><rect x="25.80" y="232.15" width="6.69" height="1.5" fill="#dcdcaa" opacity="0.8"/><rect x="32.49" y="232.15" width="0.50" height="1.5" fill="#dcdcdc" opacity="0.5"/><rect x="32.84" y="232.15" width="0.50" height="1.5" fill="#dcdcdc" opacity="0.5"/><rect x="33.54" y="232.15" width="0.70" height="1.5" fill="#b4b4b4" opacity="0.5"/><rect x="34.60" y="232.15" width="5.63" height="1.5" fill="#dcdcdc" opacity="0.8"/><rect x="40.23" y="232.15" width="0.50" height="1.5" fill="#dcdcdc" opacity="0.5"/><rect x="19.82" y="237.15" width="2.11" height="1.5" fill="#569cd6" opacity="0.8"/><rect x="22.28" y="237.15" width="3.17" height="1.5" fill="#dcdcdc" opacity="0.8"/><rect x="25.80" y="237.15" width="7.39" height="1.5" fill="#dcdcaa" opacity="0.8"/><rect x="33.19" y="237.15" width="0.50" height="1.5" fill="#dcdcdc" opacity="0.5"/><rect x="33.54" y="237.15" width="0.50" height="1.5" fill="#dcdcdc" opacity="0.5"/><rect x="34.25" y="237.15" width="0.70" height="1.5" fill="#b4b4b4" opacity="0.5"/><rect x="35.30" y="237.15" width="6.34" height="1.5" fill="#dcdcdc" opacity="0.8"/><rect x="41.64" y="237.15" width="0.50" height="1.5" fill="#dcdcdc" opacity="0.5"/><rect x="19.82" y="242.15" width="2.11" height="1.5" fill="#569cd6" opacity="0.8"/><rect x="22.28" y="242.15" width="3.17" height="1.5" fill="#dcdcdc" opacity="0.8"/><rect x="25.80" y="242.15" width="6.34" height="1.5" fill="#dcdcaa" opacity="0.8"/><rect x="32.14" y="242.15" width="0.50" height="1.5" fill="#dcdcdc" opacity="0.5"/><rect x="32.49" y="242.15" width="0.50" height="1.5" fill="#dcdcdc" opacity="0.5"/><rect x="33.19" y="242.15" width="0.70" height="1.5" fill="#b4b4b4" opacity="0.5"/><rect x="34.25" y="242.15" width="5.28" height="1.5" fill="#dcdcdc" opacity="0.8"/><rect x="39.53" y="242.15" width="0.50" height="1.5" fill="#dcdcdc" opacity="0.5"/><rect x="19.82" y="247.15" width="2.11" height="1.5" fill="#569cd6" opacity="0.8"/><rect x="22.28" y="247.15" width="3.17" height="1.5" fill="#dcdcdc" opacity="0.8"/><rect x="25.80" y="247.15" width="8.10" height="1.5" fill="#dcdcaa" opacity="0.8"/><rect x="33.90" y="247.15" width="0.50" height="1.5" fill="#dcdcdc" opacity="0.5"/><rect x="34.25" y="247.15" width="0.50" height="1.5" fill="#dcdcdc" opacity="0.5"/><rect x="34.95" y="247.15" width="0.70" height="1.5" fill="#b4b4b4" opacity="0.5"/><rect x="36.01" y="247.15" width="7.04" height="1.5" fill="#dcdcdc" opacity="0.8"/><rect x="43.05" y="247.15" width="0.50" height="1.5" fill="#dcdcdc" opacity="0.5"/><rect x="19.82" y="252.15" width="2.11" height="1.5" fill="#569cd6" opacity="0.8"/><rect x="22.28" y="252.15" width="3.17" height="1.5" fill="#dcdcdc" opacity="0.8"/><rect x="25.80" y="252.15" width="7.39" height="1.5" fill="#dcdcaa" opacity="0.8"/><rect x="33.19" y="252.15" width="0.50" height="1.5" fill="#dcdcdc" opacity="0.5"/><rect x="33.54" y="252.15" width="0.50" height="1.5" fill="#dcdcdc" opacity="0.5"/><rect x="34.25" y="252.15" width="0.70" height="1.5" fill="#b4b4b4" opacity="0.5"/><rect x="35.30" y="252.15" width="6.34" height="1.5" fill="#dcdcdc" opacity="0.8"/><rect x="41.64" y="252.15" width="0.50" height="1.5" fill="#dcdcdc" opacity="0.5"/><rect x="19.82" y="257.15" width="2.11" height="1.5" fill="#569cd6" opacity="0.8"/><rect x="22.28" y="257.15" width="3.17" height="1.5" fill="#dcdcdc" opacity="0.8"/><rect x="25.80" y="257.15" width="5.63" height="1.5" fill="#dcdcaa" opacity="0.8"/><rect x="31.43" y="257.15" width="0.50" height="1.5" fill="#dcdcdc" opacity="0.5"/><rect x="31.78" y="257.15" width="0.50" height="1.5" fill="#dcdcdc" opacity="0.5"/><rect x="32.49" y="257.15" width="0.70" height="1.5" fill="#b4b4b4" opacity="0.5"/><rect x="33.54" y="257.15" width="2.11" height="1.5" fill="#dcdcdc" opacity="0.8"/><rect x="35.66" y="257.15" width="0.50" height="1.5" fill="#b4b4b4" opacity="0.5"/><rect x="36.01" y="257.15" width="5.63" height="1.5" fill="#dcdcdc" opacity="0.8"/><rect x="41.64" y="257.15" width="0.50" height="1.5" fill="#dcdcdc" opacity="0.5"/><rect x="41.99" y="257.15" width="0.50" height="1.5" fill="#dcdcdc" opacity="0.5"/><rect x="42.34" y="257.15" width="0.50" height="1.5" fill="#dcdcdc" opacity="0.5"/><rect x="19.82" y="262.15" width="2.11" height="1.5" fill="#569cd6" opacity="0.8"/><rect x="22.28" y="262.15" width="1.41" height="1.5" fill="#569cd6" opacity="0.8"/><rect x="24.04" y="262.15" width="3.87" height="1.5" fill="#dcdcaa" opacity="0.8"/><rect x="27.91" y="262.15" width="0.50" height="1.5" fill="#dcdcdc" opacity="0.5"/><rect x="28.26" y="262.15" width="0.50" height="1.5" fill="#dcdcdc" opacity="0.5"/><rect x="28.97" y="262.15" width="0.70" height="1.5" fill="#b4b4b4" opacity="0.5"/><rect x="30.02" y="262.15" width="9.15" height="1.5" fill="#dcdcdc" opacity="0.8"/><rect x="39.18" y="262.15" width="0.50" height="1.5" fill="#dcdcdc" opacity="0.5"/><rect x="19.82" y="267.15" width="2.11" height="1.5" fill="#569cd6" opacity="0.8"/><rect x="22.28" y="267.15" width="1.76" height="1.5" fill="#569cd6" opacity="0.8"/><rect x="24.39" y="267.15" width="4.58" height="1.5" fill="#dcdcaa" opacity="0.8"/><rect x="28.97" y="267.15" width="0.50" height="1.5" fill="#dcdcdc" opacity="0.5"/><rect x="29.32" y="267.15" width="0.50" height="1.5" fill="#dcdcdc" opacity="0.5"/><rect x="30.02" y="267.15" width="0.70" height="1.5" fill="#b4b4b4" opacity="0.5"/><rect x="31.08" y="267.15" width="5.63" height="1.5" fill="#dcdcdc" opacity="0.8"/><rect x="37.06" y="267.15" width="0.50" height="1.5" fill="#b4b4b4" opacity="0.5"/><rect x="37.77" y="267.15" width="5.63" height="1.5" fill="#dcdcdc" opacity="0.8"/><rect x="43.40" y="267.15" width="0.50" height="1.5" fill="#dcdcdc" opacity="0.5"/><rect x="19.82" y="272.15" width="2.11" height="1.5" fill="#569cd6" opacity="0.8"/><rect x="22.28" y="272.15" width="2.82" height="1.5" fill="#dcdcdc" opacity="0.8"/><rect x="25.45" y="272.15" width="3.87" height="1.5" fill="#dcdcaa" opacity="0.8"/><rect x="29.32" y="272.15" width="0.50" height="1.5" fill="#dcdcdc" opacity="0.5"/><rect x="29.67" y="272.15" width="0.50" height="1.5" fill="#dcdcdc" opacity="0.5"/><rect x="30.38" y="272.15" width="0.70" height="1.5" fill="#b4b4b4" opacity="0.5"/><rect x="31.43" y="272.15" width="2.82" height="1.5" fill="#dcdcdc" opacity="0.8"/><rect x="34.25" y="272.15" width="0.50" height="1.5" fill="#dcdcdc" opacity="0.5"/><rect x="19.82" y="277.15" width="2.11" height="1.5" fill="#569cd6" opacity="0.8"/><rect x="22.28" y="277.15" width="1.41" height="1.5" fill="#569cd6" opacity="0.8"/><rect x="24.04" y="277.15" width="2.11" height="1.5" fill="#dcdcaa" opacity="0.8"/><rect x="26.15" y="277.15" width="0.50" height="1.5" fill="#dcdcdc" opacity="0.5"/><rect x="26.50" y="277.15" width="0.50" height="1.5" fill="#dcdcdc" opacity="0.5"/><rect x="27.21" y="277.15" width="0.70" height="1.5" fill="#b4b4b4" opacity="0.5"/><rect x="28.26" y="277.15" width="4.22" height="1.5" fill="#dcdcdc" opacity="0.8"/><rect x="32.49" y="277.15" width="0.50" height="1.5" fill="#dcdcdc" opacity="0.5"/><rect x="19.82" y="282.15" width="2.11" height="1.5" fill="#569cd6" opacity="0.8"/><rect x="22.28" y="282.15" width="1.41" height="1.5" fill="#569cd6" opacity="0.8"/><rect x="24.04" y="282.15" width="4.58" height="1.5" fill="#dcdcaa" opacity="0.8"/><rect x="28.62" y="282.15" width="0.50" height="1.5" fill="#dcdcdc" opacity="0.5"/><rect x="28.97" y="282.15" width="0.50" height="1.5" fill="#dcdcdc" opacity="0.5"/><rect x="29.67" y="282.15" width="0.70" height="1.5" fill="#b4b4b4" opacity="0.5"/><rect x="30.73" y="282.15" width="5.98" height="1.5" fill="#dcdcdc" opacity="0.8"/><rect x="36.71" y="282.15" width="0.50" height="1.5" fill="#dcdcdc" opacity="0.5"/><rect x="19.82" y="287.15" width="2.11" height="1.5" fill="#569cd6" opacity="0.8"/><rect x="22.28" y="287.15" width="1.41" height="1.5" fill="#569cd6" opacity="0.8"/><rect x="24.04" y="287.15" width="3.17" height="1.5" fill="#dcdcaa" opacity="0.8"/><rect x="27.21" y="287.15" width="0.50" height="1.5" fill="#dcdcdc" opacity="0.5"/><rect x="27.56" y="287.15" width="0.50" height="1.5" fill="#dcdcdc" opacity="0.5"/><rect x="28.26" y="287.15" width="0.70" height="1.5" fill="#b4b4b4" opacity="0.5"/><rect x="29.32" y="287.15" width="5.98" height="1.5" fill="#dcdcdc" opacity="0.8"/><rect x="35.66" y="287.15" width="0.70" height="1.5" fill="#b4b4b4" opacity="0.5"/><rect x="36.71" y="287.15" width="2.82" height="1.5" fill="#dcdcdc" opacity="0.8"/><rect x="39.53" y="287.15" width="0.50" height="1.5" fill="#b4b4b4" opacity="0.5"/><rect x="39.88" y="287.15" width="6.34" height="1.5" fill="#dcdcdc" opacity="0.8"/><rect x="46.22" y="287.15" width="0.50" height="1.5" fill="#dcdcdc" opacity="0.5"/><rect x="46.57" y="287.15" width="0.50" height="1.5" fill="#dcdcdc" opacity="0.5"/><rect x="46.92" y="287.15" width="0.50" height="1.5" fill="#dcdcdc" opacity="0.5"/><rect x="19.82" y="292.15" width="2.11" height="1.5" fill="#569cd6" opacity="0.8"/><rect x="22.28" y="292.15" width="1.06" height="1.5" fill="#569cd6" opacity="0.8"/><rect x="23.69" y="292.15" width="7.04" height="1.5" fill="#dcdcaa" opacity="0.8"/><rect x="30.73" y="292.15" width="0.50" height="1.5" fill="#dcdcdc" opacity="0.5"/><rect x="31.08" y="292.15" width="0.50" height="1.5" fill="#dcdcdc" opacity="0.5"/><rect x="31.78" y="292.15" width="0.70" height="1.5" fill="#b4b4b4" opacity="0.5"/><rect x="32.84" y="292.15" width="5.98" height="1.5" fill="#dcdcdc" opacity="0.8"/><rect x="39.18" y="292.15" width="0.50" height="1.5" fill="#b4b4b4" opacity="0.5"/><rect x="39.88" y="292.15" width="0.50" height="1.5" fill="#b5cea8" opacity="0.5"/><rect x="40.23" y="292.15" width="0.50" height="1.5" fill="#dcdcdc" opacity="0.5"/><rect x="19.82" y="297.15" width="2.11" height="1.5" fill="#569cd6" opacity="0.8"/><rect x="22.28" y="297.15" width="8.80" height="1.5" fill="#dcdcdc" opacity="0.8"/><rect x="31.43" y="297.15" width="7.39" height="1.5" fill="#dcdcaa" opacity="0.8"/><rect x="38.82" y="297.15" width="0.50" height="1.5" fill="#dcdcdc" opacity="0.5"/><rect x="39.18" y="297.15" width="0.50" height="1.5" fill="#dcdcdc" opacity="0.5"/><rect x="39.88" y="297.15" width="0.70" height="1.5" fill="#b4b4b4" opacity="0.5"/><rect x="40.94" y="297.15" width="3.52" height="1.5" fill="#dcdcdc" opacity="0.8"/><rect x="44.46" y="297.15" width="0.50" height="1.5" fill="#dcdcdc" opacity="0.5"/><rect x="19.82" y="302.15" width="2.11" height="1.5" fill="#569cd6" opacity="0.8"/><rect x="22.28" y="302.15" width="8.10" height="1.5" fill="#dcdcdc" opacity="0.8"/><rect x="30.73" y="302.15" width="7.04" height="1.5" fill="#dcdcaa" opacity="0.8"/><rect x="37.77" y="302.15" width="0.50" height="1.5" fill="#dcdcdc" opacity="0.5"/><rect x="38.12" y="302.15" width="0.50" height="1.5" fill="#dcdcdc" opacity="0.5"/><rect x="38.82" y="302.15" width="0.70" height="1.5" fill="#b4b4b4" opacity="0.5"/><rect x="39.88" y="302.15" width="5.98" height="1.5" fill="#dcdcdc" opacity="0.8"/><rect x="45.86" y="302.15" width="0.50" height="1.5" fill="#dcdcdc" opacity="0.5"/><rect x="19.82" y="312.15" width="2.11" height="1.5" fill="#569cd6" opacity="0.8"/><rect x="22.28" y="312.15" width="1.41" height="1.5" fill="#569cd6" opacity="0.8"/><rect x="24.04" y="312.15" width="2.11" height="1.5" fill="#dcdcaa" opacity="0.8"/><rect x="26.15" y="312.15" width="0.50" height="1.5" fill="#dcdcdc" opacity="0.5"/><rect x="26.50" y="312.15" width="0.50" height="1.5" fill="#dcdcdc" opacity="0.5"/><rect x="19.82" y="317.15" width="0.50" height="1.5" fill="#dcdcdc" opacity="0.5"/><rect x="21.22" y="322.15" width="0.70" height="1.5" fill="#d8a0df" opacity="0.5"/><rect x="22.28" y="322.15" width="0.50" height="1.5" fill="#dcdcdc" opacity="0.5"/><rect x="22.63" y="322.15" width="2.82" height="1.5" fill="#dcdcdc" opacity="0.8"/><rect x="25.80" y="322.15" width="0.70" height="1.5" fill="#b4b4b4" opacity="0.5"/><rect x="26.86" y="322.15" width="1.41" height="1.5" fill="#569cd6" opacity="0.8"/><rect x="28.62" y="322.15" width="0.70" height="1.5" fill="#b4b4b4" opacity="0.5"/><rect x="29.67" y="322.15" width="2.82" height="1.5" fill="#dcdcdc" opacity="0.8"/><rect x="32.84" y="322.15" width="0.70" height="1.5" fill="#b4b4b4" opacity="0.5"/><rect x="33.90" y="322.15" width="1.41" height="1.5" fill="#569cd6" opacity="0.8"/><rect x="35.30" y="322.15" width="0.50" height="1.5" fill="#dcdcdc" opacity="0.5"/><rect x="36.01" y="322.15" width="2.11" height="1.5" fill="#d8a0df" opacity="0.8"/><rect x="38.12" y="322.15" width="0.50" height="1.5" fill="#dcdcdc" opacity="0.5"/><rect x="21.22" y="332.15" width="1.06" height="1.5" fill="#569cd6" opacity="0.8"/><rect x="22.63" y="332.15" width="3.17" height="1.5" fill="#dcdcdc" opacity="0.8"/><rect x="26.15" y="332.15" width="0.50" height="1.5" fill="#b4b4b4" opacity="0.5"/><rect x="26.86" y="332.15" width="4.58" height="1.5" fill="#dcdcdc" opacity="0.8"/><rect x="31.43" y="332.15" width="0.50" height="1.5" fill="#dcdcdc" opacity="0.5"/><rect x="31.78" y="332.15" width="0.50" height="1.5" fill="#dcdcdc" opacity="0.5"/><rect x="32.49" y="332.15" width="0.50" height="1.5" fill="#b4b4b4" opacity="0.5"/><rect x="33.19" y="332.15" width="3.87" height="1.5" fill="#dcdcdc" opacity="0.8"/><rect x="37.42" y="332.15" width="0.50" height="1.5" fill="#b4b4b4" opacity="0.5"/><rect x="38.12" y="332.15" width="5.63" height="1.5" fill="#dcdcdc" opacity="0.8"/><rect x="43.75" y="332.15" width="0.50" height="1.5" fill="#dcdcdc" opacity="0.5"/><rect x="21.22" y="337.15" width="1.06" height="1.5" fill="#569cd6" opacity="0.8"/><rect x="22.63" y="337.15" width="3.17" height="1.5" fill="#dcdcdc" opacity="0.8"/><rect x="26.15" y="337.15" width="0.50" height="1.5" fill="#b4b4b4" opacity="0.5"/><rect x="26.86" y="337.15" width="4.58" height="1.5" fill="#dcdcdc" opacity="0.8"/><rect x="31.43" y="337.15" width="0.50" height="1.5" fill="#dcdcdc" opacity="0.5"/><rect x="31.78" y="337.15" width="0.50" height="1.5" fill="#dcdcdc" opacity="0.5"/><rect x="32.49" y="337.15" width="0.50" height="1.5" fill="#b4b4b4" opacity="0.5"/><rect x="33.19" y="337.15" width="5.28" height="1.5" fill="#dcdcdc" opacity="0.8"/><rect x="38.82" y="337.15" width="0.50" height="1.5" fill="#b4b4b4" opacity="0.5"/><rect x="39.53" y="337.15" width="7.04" height="1.5" fill="#dcdcdc" opacity="0.8"/><rect x="46.57" y="337.15" width="0.50" height="1.5" fill="#dcdcdc" opacity="0.5"/><rect x="21.22" y="347.15" width="0.70" height="1.5" fill="#d8a0df" opacity="0.5"/><rect x="22.28" y="347.15" width="0.50" height="1.5" fill="#dcdcdc" opacity="0.5"/><rect x="22.63" y="347.15" width="1.41" height="1.5" fill="#dcdcdc" opacity="0.8"/><rect x="24.04" y="347.15" width="0.50" height="1.5" fill="#dcdcdc" opacity="0.5"/><rect x="21.22" y="352.15" width="0.50" height="1.5" fill="#dcdcdc" opacity="0.5"/><rect x="22.63" y="357.15" width="10.21" height="1.5" fill="#57a64a" opacity="0.8"/><rect x="22.63" y="362.15" width="2.11" height="1.5" fill="#d8a0df" opacity="0.8"/><rect x="24.74" y="362.15" width="0.50" height="1.5" fill="#dcdcdc" opacity="0.5"/><rect x="21.22" y="367.15" width="0.50" height="1.5" fill="#dcdcdc" opacity="0.5"/><rect x="21.22" y="377.15" width="2.82" height="1.5" fill="#dcdcdc" opacity="0.8"/><rect x="24.04" y="377.15" width="0.50" height="1.5" fill="#b4b4b4" opacity="0.5"/><rect x="24.39" y="377.15" width="1.41" height="1.5" fill="#dcdcdc" opacity="0.8"/><rect x="25.80" y="377.15" width="0.50" height="1.5" fill="#dcdcdc" opacity="0.5"/><rect x="26.15" y="377.15" width="3.17" height="1.5" fill="#dcdcdc" opacity="0.8"/><rect x="29.32" y="377.15" width="0.50" height="1.5" fill="#dcdcdc" opacity="0.5"/><rect x="30.02" y="377.15" width="0.50" height="1.5" fill="#b5cea8" opacity="0.5"/><rect x="30.38" y="377.15" width="0.50" height="1.5" fill="#dcdcdc" opacity="0.5"/><rect x="31.08" y="377.15" width="1.41" height="1.5" fill="#b5cea8" opacity="0.8"/><rect x="32.49" y="377.15" width="0.50" height="1.5" fill="#dcdcdc" opacity="0.5"/><rect x="32.84" y="377.15" width="0.50" height="1.5" fill="#dcdcdc" opacity="0.5"/><rect x="21.22" y="382.15" width="2.11" height="1.5" fill="#dcdcdc" opacity="0.8"/><rect x="23.34" y="382.15" width="0.50" height="1.5" fill="#b4b4b4" opacity="0.5"/><rect x="23.69" y="382.15" width="3.52" height="1.5" fill="#dcdcdc" opacity="0.8"/><rect x="27.21" y="382.15" width="0.50" height="1.5" fill="#dcdcdc" opacity="0.5"/><rect x="27.56" y="382.15" width="0.50" height="1.5" fill="#dcdcdc" opacity="0.5"/><rect x="27.91" y="382.15" width="0.50" height="1.5" fill="#dcdcdc" opacity="0.5"/><rect x="21.22" y="387.15" width="6.34" height="1.5" fill="#dcdcdc" opacity="0.8"/><rect x="27.56" y="387.15" width="0.50" height="1.5" fill="#b4b4b4" opacity="0.5"/><rect x="27.91" y="387.15" width="3.17" height="1.5" fill="#dcdcdc" opacity="0.8"/><rect x="31.08" y="387.15" width="0.50" height="1.5" fill="#dcdcdc" opacity="0.5"/><rect x="31.43" y="387.15" width="3.17" height="1.5" fill="#dcdcdc" opacity="0.8"/><rect x="34.60" y="387.15" width="0.50" height="1.5" fill="#dcdcdc" opacity="0.5"/><rect x="35.30" y="387.15" width="1.06" height="1.5" fill="#569cd6" opacity="0.8"/><rect x="36.71" y="387.15" width="4.58" height="1.5" fill="#dcdcdc" opacity="0.8"/><rect x="41.29" y="387.15" width="0.50" height="1.5" fill="#dcdcdc" opacity="0.5"/><rect x="41.64" y="387.15" width="1.41" height="1.5" fill="#b5cea8" opacity="0.8"/><rect x="43.05" y="387.15" width="0.50" height="1.5" fill="#dcdcdc" opacity="0.5"/><rect x="43.75" y="387.15" width="0.50" height="1.5" fill="#b5cea8" opacity="0.5"/><rect x="44.10" y="387.15" width="0.50" height="1.5" fill="#dcdcdc" opacity="0.5"/><rect x="44.46" y="387.15" width="0.50" height="1.5" fill="#dcdcdc" opacity="0.5"/><rect x="44.81" y="387.15" width="0.50" height="1.5" fill="#dcdcdc" opacity="0.5"/><rect x="21.22" y="397.15" width="9.86" height="1.5" fill="#57a64a" opacity="0.8"/><rect x="21.22" y="402.15" width="1.76" height="1.5" fill="#dcdcdc" opacity="0.8"/><rect x="22.98" y="402.15" width="0.50" height="1.5" fill="#b4b4b4" opacity="0.5"/><rect x="23.34" y="402.15" width="3.17" height="1.5" fill="#dcdcdc" opacity="0.8"/><rect x="26.50" y="402.15" width="0.50" height="1.5" fill="#dcdcdc" opacity="0.5"/><rect x="26.86" y="402.15" width="4.22" height="1.5" fill="#d69d85" opacity="0.8"/><rect x="31.08" y="402.15" width="0.50" height="1.5" fill="#dcdcdc" opacity="0.5"/><rect x="31.78" y="402.15" width="2.46" height="1.5" fill="#d69d85" opacity="0.8"/><rect x="34.60" y="402.15" width="0.50" height="1.5" fill="#b4b4b4" opacity="0.5"/><rect x="35.30" y="402.15" width="1.76" height="1.5" fill="#d69d85" opacity="0.8"/><rect x="37.42" y="402.15" width="0.50" height="1.5" fill="#b4b4b4" opacity="0.5"/><rect x="38.12" y="402.15" width="2.11" height="1.5" fill="#d69d85" opacity="0.8"/><rect x="40.23" y="402.15" width="0.50" height="1.5" fill="#dcdcdc" opacity="0.5"/><rect x="40.58" y="402.15" width="0.50" height="1.5" fill="#dcdcdc" opacity="0.5"/><rect x="19.82" y="407.15" width="0.50" height="1.5" fill="#dcdcdc" opacity="0.5"/><rect x="19.82" y="417.15" width="2.11" height="1.5" fill="#569cd6" opacity="0.8"/><rect x="22.28" y="417.15" width="1.41" height="1.5" fill="#569cd6" opacity="0.8"/><rect x="24.04" y="417.15" width="1.41" height="1.5" fill="#dcdcaa" opacity="0.8"/><rect x="25.45" y="417.15" width="0.50" height="1.5" fill="#dcdcdc" opacity="0.5"/><rect x="25.80" y="417.15" width="1.76" height="1.5" fill="#569cd6" opacity="0.8"/><rect x="27.91" y="417.15" width="5.63" height="1.5" fill="#dcdcdc" opacity="0.8"/><rect x="33.90" y="417.15" width="0.50" height="1.5" fill="#b4b4b4" opacity="0.5"/><rect x="34.60" y="417.15" width="1.41" height="1.5" fill="#b5cea8" opacity="0.8"/><rect x="36.01" y="417.15" width="0.50" height="1.5" fill="#dcdcdc" opacity="0.5"/><rect x="19.82" y="422.15" width="0.50" height="1.5" fill="#dcdcdc" opacity="0.5"/><rect x="21.22" y="427.15" width="0.70" height="1.5" fill="#d8a0df" opacity="0.5"/><rect x="22.28" y="427.15" width="0.50" height="1.5" fill="#dcdcdc" opacity="0.5"/><rect x="22.63" y="427.15" width="2.11" height="1.5" fill="#dcdcdc" opacity="0.8"/><rect x="25.10" y="427.15" width="0.70" height="1.5" fill="#b4b4b4" opacity="0.5"/><rect x="26.15" y="427.15" width="1.41" height="1.5" fill="#569cd6" opacity="0.8"/><rect x="27.91" y="427.15" width="0.70" height="1.5" fill="#b4b4b4" opacity="0.5"/><rect x="28.97" y="427.15" width="4.22" height="1.5" fill="#dcdcdc" opacity="0.8"/><rect x="33.54" y="427.15" width="0.70" height="1.5" fill="#b4b4b4" opacity="0.5"/><rect x="34.60" y="427.15" width="1.41" height="1.5" fill="#569cd6" opacity="0.8"/><rect x="36.36" y="427.15" width="0.70" height="1.5" fill="#b4b4b4" opacity="0.5"/><rect x="37.42" y="427.15" width="5.98" height="1.5" fill="#dcdcdc" opacity="0.8"/><rect x="43.75" y="427.15" width="0.70" height="1.5" fill="#b4b4b4" opacity="0.5"/><rect x="44.81" y="427.15" width="0.50" height="1.5" fill="#b5cea8" opacity="0.5"/><rect x="45.16" y="427.15" width="0.50" height="1.5" fill="#dcdcdc" opacity="0.5"/><rect x="45.86" y="427.15" width="2.11" height="1.5" fill="#d8a0df" opacity="0.8"/><rect x="47.98" y="427.15" width="0.50" height="1.5" fill="#dcdcdc" opacity="0.5"/><rect x="21.22" y="437.15" width="5.98" height="1.5" fill="#dcdcdc" opacity="0.8"/><rect x="27.56" y="437.15" width="0.50" height="1.5" fill="#b4b4b4" opacity="0.5"/><rect x="28.26" y="437.15" width="3.52" height="1.5" fill="#dcdcdc" opacity="0.8"/><rect x="32.14" y="437.15" width="0.50" height="1.5" fill="#b4b4b4" opacity="0.5"/><rect x="32.84" y="437.15" width="0.50" height="1.5" fill="#b5cea8" opacity="0.5"/><rect x="33.19" y="437.15" width="0.50" height="1.5" fill="#dcdcdc" opacity="0.5"/><rect x="21.22" y="442.15" width="2.82" height="1.5" fill="#dcdcdc" opacity="0.8"/><rect x="24.04" y="442.15" width="0.50" height="1.5" fill="#b4b4b4" opacity="0.5"/><rect x="24.39" y="442.15" width="1.41" height="1.5" fill="#dcdcdc" opacity="0.8"/><rect x="25.80" y="442.15" width="0.50" height="1.5" fill="#dcdcdc" opacity="0.5"/><rect x="26.15" y="442.15" width="3.17" height="1.5" fill="#dcdcdc" opacity="0.8"/><rect x="29.32" y="442.15" width="0.50" height="1.5" fill="#dcdcdc" opacity="0.5"/><rect x="30.02" y="442.15" width="0.50" height="1.5" fill="#b5cea8" opacity="0.5"/><rect x="30.38" y="442.15" width="0.50" height="1.5" fill="#dcdcdc" opacity="0.5"/><rect x="31.08" y="442.15" width="1.41" height="1.5" fill="#b5cea8" opacity="0.8"/><rect x="32.49" y="442.15" width="0.50" height="1.5" fill="#dcdcdc" opacity="0.5"/><rect x="32.84" y="442.15" width="0.50" height="1.5" fill="#dcdcdc" opacity="0.5"/><rect x="21.22" y="447.15" width="3.52" height="1.5" fill="#dcdcdc" opacity="0.8"/><rect x="25.10" y="447.15" width="2.82" height="1.5" fill="#dcdcdc" opacity="0.8"/><rect x="28.26" y="447.15" width="0.50" height="1.5" fill="#b4b4b4" opacity="0.5"/><rect x="28.97" y="447.15" width="3.52" height="1.5" fill="#dcdcdc" opacity="0.8"/><rect x="32.49" y="447.15" width="0.50" height="1.5" fill="#b4b4b4" opacity="0.5"/><rect x="32.84" y="447.15" width="4.22" height="1.5" fill="#dcdcdc" opacity="0.8"/><rect x="37.06" y="447.15" width="0.50" height="1.5" fill="#dcdcdc" opacity="0.5"/><rect x="37.42" y="447.15" width="4.22" height="1.5" fill="#dcdcdc" opacity="0.8"/><rect x="41.64" y="447.15" width="0.50" height="1.5" fill="#b4b4b4" opacity="0.5"/><rect x="41.99" y="447.15" width="2.46" height="1.5" fill="#dcdcdc" opacity="0.8"/><rect x="44.81" y="447.15" width="0.50" height="1.5" fill="#b4b4b4" opacity="0.5"/><rect x="45.51" y="447.15" width="2.46" height="1.5" fill="#b5cea8" opacity="0.8"/><rect x="47.98" y="447.15" width="0.50" height="1.5" fill="#dcdcdc" opacity="0.5"/><rect x="48.33" y="447.15" width="0.50" height="1.5" fill="#dcdcdc" opacity="0.5"/><rect x="21.22" y="452.15" width="2.11" height="1.5" fill="#dcdcdc" opacity="0.8"/><rect x="23.34" y="452.15" width="0.50" height="1.5" fill="#b4b4b4" opacity="0.5"/><rect x="23.69" y="452.15" width="2.11" height="1.5" fill="#dcdcdc" opacity="0.8"/><rect x="25.80" y="452.15" width="0.50" height="1.5" fill="#dcdcdc" opacity="0.5"/><rect x="26.15" y="452.15" width="0.50" height="1.5" fill="#dcdcdc" opacity="0.5"/><rect x="26.50" y="452.15" width="0.50" height="1.5" fill="#dcdcdc" opacity="0.5"/><rect x="21.22" y="457.15" width="2.11" height="1.5" fill="#d8a0df" opacity="0.8"/><rect x="23.34" y="457.15" width="0.50" height="1.5" fill="#dcdcdc" opacity="0.5"/><rect x="21.22" y="467.15" width="3.52" height="1.5" fill="#dcdcdc" opacity="0.8"/><rect x="25.10" y="467.15" width="3.52" height="1.5" fill="#dcdcdc" opacity="0.8"/><rect x="28.97" y="467.15" width="0.50" height="1.5" fill="#b4b4b4" opacity="0.5"/><rect x="29.67" y="467.15" width="3.87" height="1.5" fill="#dcdcdc" opacity="0.8"/><rect x="33.54" y="467.15" width="0.50" height="1.5" fill="#dcdcdc" opacity="0.5"/><rect x="33.90" y="467.15" width="5.63" height="1.5" fill="#dcdcdc" opacity="0.8"/><rect x="39.53" y="467.15" width="0.50" height="1.5" fill="#dcdcdc" opacity="0.5"/><rect x="40.23" y="467.15" width="4.22" height="1.5" fill="#dcdcdc" opacity="0.8"/><rect x="44.46" y="467.15" width="0.50" height="1.5" fill="#dcdcdc" opacity="0.5"/><rect x="45.16" y="467.15" width="2.82" height="1.5" fill="#dcdcdc" opacity="0.8"/><rect x="47.98" y="467.15" width="0.50" height="1.5" fill="#dcdcdc" opacity="0.5"/><rect x="48.33" y="467.15" width="0.50" height="1.5" fill="#dcdcdc" opacity="0.5"/><rect x="21.22" y="472.15" width="3.52" height="1.5" fill="#dcdcdc" opacity="0.8"/><rect x="24.74" y="472.15" width="0.50" height="1.5" fill="#b4b4b4" opacity="0.5"/><rect x="25.10" y="472.15" width="2.82" height="1.5" fill="#dcdcdc" opacity="0.8"/><rect x="28.26" y="472.15" width="0.50" height="1.5" fill="#b4b4b4" opacity="0.5"/><rect x="28.97" y="472.15" width="3.52" height="1.5" fill="#dcdcdc" opacity="0.8"/><rect x="32.49" y="472.15" width="0.50" height="1.5" fill="#b4b4b4" opacity="0.5"/><rect x="32.84" y="472.15" width="3.17" height="1.5" fill="#dcdcdc" opacity="0.8"/><rect x="36.01" y="472.15" width="0.50" height="1.5" fill="#b4b4b4" opacity="0.5"/><rect x="36.36" y="472.15" width="2.46" height="1.5" fill="#dcdcdc" opacity="0.8"/><rect x="39.18" y="472.15" width="0.50" height="1.5" fill="#b4b4b4" opacity="0.5"/><rect x="39.88" y="472.15" width="5.98" height="1.5" fill="#dcdcdc" opacity="0.8"/><rect x="45.86" y="472.15" width="0.50" height="1.5" fill="#dcdcdc" opacity="0.5"/><rect x="19.82" y="477.15" width="0.50" height="1.5" fill="#dcdcdc" opacity="0.5"/><rect x="19.82" y="487.15" width="2.11" height="1.5" fill="#569cd6" opacity="0.8"/><rect x="22.28" y="487.15" width="1.41" height="1.5" fill="#569cd6" opacity="0.8"/><rect x="24.04" y="487.15" width="4.93" height="1.5" fill="#dcdcaa" opacity="0.8"/><rect x="28.97" y="487.15" width="0.50" height="1.5" fill="#dcdcdc" opacity="0.5"/><rect x="29.32" y="487.15" width="1.06" height="1.5" fill="#569cd6" opacity="0.8"/><rect x="30.73" y="487.15" width="2.11" height="1.5" fill="#dcdcdc" opacity="0.8"/><rect x="32.84" y="487.15" width="0.50" height="1.5" fill="#dcdcdc" opacity="0.5"/><rect x="33.54" y="487.15" width="0.70" height="1.5" fill="#b4b4b4" opacity="0.5"/><rect x="34.60" y="487.15" width="5.98" height="1.5" fill="#dcdcdc" opacity="0.8"/><rect x="40.94" y="487.15" width="0.50" height="1.5" fill="#b4b4b4" opacity="0.5"/><rect x="41.64" y="487.15" width="2.11" height="1.5" fill="#dcdcdc" opacity="0.8"/><rect x="44.10" y="487.15" width="0.70" height="1.5" fill="#b4b4b4" opacity="0.5"/><rect x="45.16" y="487.15" width="0.50" height="1.5" fill="#b5cea8" opacity="0.5"/><rect x="45.86" y="487.15" width="0.50" height="1.5" fill="#b4b4b4" opacity="0.5"/><rect x="46.57" y="487.15" width="2.11" height="1.5" fill="#dcdcdc" opacity="0.8"/><rect x="19.82" y="492.15" width="0.50" height="1.5" fill="#b4b4b4" opacity="0.5"/><rect x="20.52" y="492.15" width="1.76" height="1.5" fill="#dcdcdc" opacity="0.8"/><rect x="22.28" y="492.15" width="0.50" height="1.5" fill="#b4b4b4" opacity="0.5"/><rect x="22.63" y="492.15" width="1.76" height="1.5" fill="#dcdcdc" opacity="0.8"/><rect x="24.39" y="492.15" width="0.50" height="1.5" fill="#dcdcdc" opacity="0.5"/><rect x="24.74" y="492.15" width="5.98" height="1.5" fill="#dcdcdc" opacity="0.8"/><rect x="31.08" y="492.15" width="0.50" height="1.5" fill="#b4b4b4" opacity="0.5"/><rect x="31.78" y="492.15" width="2.11" height="1.5" fill="#dcdcdc" opacity="0.8"/><rect x="33.90" y="492.15" width="0.50" height="1.5" fill="#dcdcdc" opacity="0.5"/><rect x="34.60" y="492.15" width="0.50" height="1.5" fill="#b5cea8" opacity="0.5"/><rect x="34.95" y="492.15" width="0.50" height="1.5" fill="#dcdcdc" opacity="0.5"/><rect x="35.66" y="492.15" width="2.82" height="1.5" fill="#dcdcdc" opacity="0.8"/><rect x="38.47" y="492.15" width="0.50" height="1.5" fill="#b4b4b4" opacity="0.5"/><rect x="38.82" y="492.15" width="6.34" height="1.5" fill="#dcdcdc" opacity="0.8"/><rect x="45.16" y="492.15" width="0.50" height="1.5" fill="#dcdcdc" opacity="0.5"/><rect x="45.51" y="492.15" width="0.50" height="1.5" fill="#dcdcdc" opacity="0.5"/><rect x="45.86" y="492.15" width="0.50" height="1.5" fill="#dcdcdc" opacity="0.5"/><rect x="46.22" y="492.15" width="0.50" height="1.5" fill="#dcdcdc" opacity="0.5"/><rect x="19.82" y="497.15" width="0.50" height="1.5" fill="#dcdcdc" opacity="0.5"/><rect x="19.82" y="507.15" width="2.11" height="1.5" fill="#569cd6" opacity="0.8"/><rect x="22.28" y="507.15" width="1.41" height="1.5" fill="#569cd6" opacity="0.8"/><rect x="24.04" y="507.15" width="4.22" height="1.5" fill="#dcdcaa" opacity="0.8"/><rect x="28.26" y="507.15" width="0.50" height="1.5" fill="#dcdcdc" opacity="0.5"/><rect x="28.62" y="507.15" width="1.06" height="1.5" fill="#569cd6" opacity="0.8"/><rect x="30.02" y="507.15" width="1.41" height="1.5" fill="#dcdcdc" opacity="0.8"/><rect x="31.43" y="507.15" width="0.50" height="1.5" fill="#dcdcdc" opacity="0.5"/><rect x="19.82" y="512.15" width="0.50" height="1.5" fill="#dcdcdc" opacity="0.5"/><rect x="21.22" y="517.15" width="0.70" height="1.5" fill="#d8a0df" opacity="0.5"/><rect x="22.28" y="517.15" width="0.50" height="1.5" fill="#dcdcdc" opacity="0.5"/><rect x="22.63" y="517.15" width="1.41" height="1.5" fill="#dcdcdc" opacity="0.8"/><rect x="24.39" y="517.15" width="0.70" height="1.5" fill="#b4b4b4" opacity="0.5"/><rect x="25.45" y="517.15" width="0.50" height="1.5" fill="#b5cea8" opacity="0.5"/><rect x="25.80" y="517.15" width="0.50" height="1.5" fill="#dcdcdc" opacity="0.5"/><rect x="26.50" y="517.15" width="2.11" height="1.5" fill="#d8a0df" opacity="0.8"/><rect x="28.62" y="517.15" width="0.50" height="1.5" fill="#dcdcdc" opacity="0.5"/><rect x="21.22" y="522.15" width="2.82" height="1.5" fill="#dcdcdc" opacity="0.8"/><rect x="24.04" y="522.15" width="0.50" height="1.5" fill="#b4b4b4" opacity="0.5"/><rect x="24.39" y="522.15" width="2.46" height="1.5" fill="#dcdcdc" opacity="0.8"/><rect x="26.86" y="522.15" width="0.50" height="1.5" fill="#dcdcdc" opacity="0.5"/><rect x="27.21" y="522.15" width="5.98" height="1.5" fill="#dcdcdc" opacity="0.8"/><rect x="33.19" y="522.15" width="0.50" height="1.5" fill="#dcdcdc" opacity="0.5"/><rect x="33.90" y="522.15" width="1.41" height="1.5" fill="#dcdcdc" opacity="0.8"/><rect x="35.66" y="522.15" width="0.70" height="1.5" fill="#b4b4b4" opacity="0.5"/><rect x="36.71" y="522.15" width="0.50" height="1.5" fill="#b5cea8" opacity="0.5"/><rect x="37.42" y="522.15" width="0.50" height="1.5" fill="#b4b4b4" opacity="0.5"/><rect x="38.12" y="522.15" width="1.41" height="1.5" fill="#569cd6" opacity="0.8"/><rect x="39.88" y="522.15" width="0.50" height="1.5" fill="#b4b4b4" opacity="0.5"/><rect x="40.58" y="522.15" width="1.76" height="1.5" fill="#569cd6" opacity="0.8"/><rect x="42.34" y="522.15" width="0.50" height="1.5" fill="#dcdcdc" opacity="0.5"/><rect x="42.70" y="522.15" width="0.50" height="1.5" fill="#dcdcdc" opacity="0.5"/><rect x="19.82" y="527.15" width="0.50" height="1.5" fill="#dcdcdc" opacity="0.5"/><rect x="19.82" y="537.15" width="2.11" height="1.5" fill="#569cd6" opacity="0.8"/><rect x="22.28" y="537.15" width="1.41" height="1.5" fill="#569cd6" opacity="0.8"/><rect x="24.04" y="537.15" width="3.87" height="1.5" fill="#dcdcaa" opacity="0.8"/><rect x="27.91" y="537.15" width="0.50" height="1.5" fill="#dcdcdc" opacity="0.5"/><rect x="28.26" y="537.15" width="0.50" height="1.5" fill="#dcdcdc" opacity="0.5"/><rect x="19.82" y="542.15" width="0.50" height="1.5" fill="#dcdcdc" opacity="0.5"/><rect x="21.22" y="547.15" width="0.70" height="1.5" fill="#d8a0df" opacity="0.5"/><rect x="22.28" y="547.15" width="0.50" height="1.5" fill="#dcdcdc" opacity="0.5"/><rect x="22.63" y="547.15" width="4.22" height="1.5" fill="#dcdcdc" opacity="0.8"/><rect x="27.21" y="547.15" width="0.70" height="1.5" fill="#b4b4b4" opacity="0.5"/><rect x="28.26" y="547.15" width="1.41" height="1.5" fill="#569cd6" opacity="0.8"/><rect x="29.67" y="547.15" width="0.50" height="1.5" fill="#dcdcdc" opacity="0.5"/><rect x="22.63" y="557.15" width="3.87" height="1.5" fill="#dcdcdc" opacity="0.8"/><rect x="26.50" y="557.15" width="0.50" height="1.5" fill="#dcdcdc" opacity="0.5"/><rect x="26.86" y="557.15" width="4.22" height="1.5" fill="#dcdcdc" opacity="0.8"/><rect x="31.08" y="557.15" width="0.50" height="1.5" fill="#dcdcdc" opacity="0.5"/><rect x="31.78" y="557.15" width="4.93" height="1.5" fill="#dcdcdc" opacity="0.8"/><rect x="36.71" y="557.15" width="0.50" height="1.5" fill="#b4b4b4" opacity="0.5"/><rect x="37.06" y="557.15" width="2.82" height="1.5" fill="#dcdcdc" opacity="0.8"/><rect x="39.88" y="557.15" width="0.50" height="1.5" fill="#dcdcdc" opacity="0.5"/><rect x="40.58" y="557.15" width="4.93" height="1.5" fill="#dcdcdc" opacity="0.8"/><rect x="45.51" y="557.15" width="0.50" height="1.5" fill="#dcdcdc" opacity="0.5"/><rect x="45.86" y="557.15" width="0.50" height="1.5" fill="#dcdcdc" opacity="0.5"/><rect x="22.63" y="562.15" width="2.11" height="1.5" fill="#dcdcdc" opacity="0.8"/><rect x="24.74" y="562.15" width="0.50" height="1.5" fill="#b4b4b4" opacity="0.5"/><rect x="25.10" y="562.15" width="3.17" height="1.5" fill="#dcdcdc" opacity="0.8"/><rect x="28.26" y="562.15" width="0.50" height="1.5" fill="#dcdcdc" opacity="0.5"/><rect x="28.62" y="562.15" width="1.41" height="1.5" fill="#569cd6" opacity="0.8"/><rect x="30.02" y="562.15" width="0.50" height="1.5" fill="#dcdcdc" opacity="0.5"/><rect x="30.38" y="562.15" width="0.50" height="1.5" fill="#dcdcdc" opacity="0.5"/><rect x="31.08" y="562.15" width="8.45" height="1.5" fill="#57a64a" opacity="0.8"/><rect x="21.22" y="567.15" width="0.50" height="1.5" fill="#dcdcdc" opacity="0.5"/><rect x="19.82" y="572.15" width="0.50" height="1.5" fill="#dcdcdc" opacity="0.5"/><rect x="18.41" y="577.15" width="0.50" height="1.5" fill="#dcdcdc" opacity="0.5"/><rect x="17.00" y="582.15" width="0.50" height="1.5" fill="#dcdcdc" opacity="0.5"/><rect x="0" y="156" width="50" height="2" fill="#f4f4f4"/></svg>
<div class="a" style="left:941px;top:62px;width:7.5px;height:950px;background:#1f1f1f;"></div>
<div class="a" style="left:6px;top:995px;width:935px;height:17.5px;background:#2d2d2d;border:1px solid #353535;border-top:none;"></div>
<div class="a" style="left:8px;top:995.5px;width:59.2px;height:16.5px;background:#383838;border:1px solid #3f3f3f;"></div>
<div class="a t" style="left:9.6px;top:994.0px;height:20px;line-height:20px;font-size:11.2px;color:#f0f0f0;letter-spacing:-0.471px;">100 %</div>
<svg class="a" style="left:57.45px;top:1002.0px;" width="7.5" height="5" viewBox="0 0 7.5 5"><path d="M1 1 H6.5 L3.75 4 Z" fill="#d0d0d0"/></svg>
<svg class="a" style="left:70px;top:997px;" width="14" height="14" viewBox="0 0 14 14"><path d="M5.2 12.8 V10.2 M8.8 12.8 V11 C10.2 11.2 10.8 10.8 10.8 9.8 V8.2 H11.8 L10.9 5.8 C10.9 2.8 8.8 1 6.2 1 C4 1 2.8 2.2 2.6 3.4" fill="none" stroke="#9a6cc4" stroke-width="1.4"/><path d="M1 8.6 L4.4 5.4 M3.2 4.2 C4.6 3.4 6.2 4.6 5.6 6.4 M0.6 7.4 C-0.2 8.8 1.2 10.2 2.6 9.4" fill="none" stroke="#9a6cc4" stroke-width="1.5"/><path d="M7.2 3.4 L8.4 4.4 L7.8 6.6" fill="none" stroke="#9a6cc4" stroke-width="1"/></svg>
<svg class="a" style="left:109.5px;top:998px;" width="12" height="12" viewBox="0 0 12 12"><circle cx="6" cy="6" r="5.6" fill="#86dc86"/><path d="M3.2 6.2 L5.2 8.2 L8.9 4.2" fill="none" stroke="#1e1e1e" stroke-width="1.4"/></svg>
<div class="a t" style="left:126.5px;top:994.0px;height:20px;line-height:20px;font-size:11.2px;color:#f0f0f0;letter-spacing:0.179px;">No issues found</div>
<div class="a" style="left:267.8px;top:997px;width:1.4px;height:13px;background:#b8b8b8;"></div>
<svg class="a" style="left:282px;top:997px;" width="15" height="14" viewBox="0 0 15 14"><path d="M13.6 0.6 L8.9 5.3" stroke="#e4e4e4" stroke-width="2.1" stroke-linecap="round"/><path d="M5.7 4.6 L1 7.8 L6.4 12.9 L9.7 7.3 Z" fill="#6b5d38" stroke="#e2c47a" stroke-width="1.2" stroke-linejoin="round"/><path d="M3.6 8 L6.2 10.4" stroke="#2d2d2d" stroke-width="1"/><path d="M2.5 1.4999999999999998 L2.95 2.8499999999999996 L4.3 3.3 L2.95 3.75 L2.5 5.1 L2.05 3.75 L0.7 3.3 L2.05 2.8499999999999996 Z M6.4 -0.30000000000000004 L6.8500000000000005 1.05 L8.200000000000001 1.5 L6.8500000000000005 1.95 L6.4 3.3 L5.95 1.95 L4.6000000000000005 1.5 L5.95 1.05 Z" fill="#4db2ff"/></svg>
<svg class="a" style="left:298.85px;top:1001.0px;" width="9.3" height="6" viewBox="0 0 9.3 6"><path d="M1 1 H8.3 L4.65 5 Z" fill="#f4f4f4"/></svg>
<svg class="a" style="left:337px;top:999.2px;" width="6" height="9" viewBox="0 0 6 9"><path d="M5.5 0.3 V8.7 L0.4 4.5 Z" fill="#a0a0a0"/></svg>
<div class="a" style="left:348px;top:999.3px;width:296.5px;height:8.7px;background:#4d4d4d;"></div>
<svg class="a" style="left:754px;top:999.2px;" width="6" height="9" viewBox="0 0 6 9"><path d="M0.5 0.3 V8.7 L5.6 4.5 Z" fill="#a0a0a0"/></svg>
<div class="a t" style="left:787.5px;top:994.0px;height:20px;line-height:20px;font-size:11.2px;color:#f0f0f0;letter-spacing:-0.190px;">Ln: 27</div>
<div class="a t" style="left:836px;top:994.0px;height:20px;line-height:20px;font-size:11.2px;color:#f0f0f0;letter-spacing:-0.354px;">Ch: 1</div>
<div class="a" style="left:872px;top:995.5px;width:37px;height:17px;border:1px solid #3f3f3f;"></div>
<div class="a t" style="left:880.5px;top:994.0px;height:20px;line-height:20px;font-size:11.2px;color:#f0f0f0;letter-spacing:-1.177px;">SPC</div>
<div class="a" style="left:911px;top:995.5px;width:29.5px;height:17px;border:1px solid #3f3f3f;"></div>
<div class="a t" style="left:919px;top:994.0px;height:20px;line-height:20px;font-size:11.2px;color:#f0f0f0;letter-spacing:-0.535px;">LF</div>
<div class="a" style="left:947px;top:995px;width:942px;height:17.5px;background:#2d2d2d;border:1px solid #353535;border-top:none;"></div>
<div class="a" style="left:949px;top:995.5px;width:59.799999999999955px;height:16.5px;background:#383838;border:1px solid #3f3f3f;"></div>
<div class="a t" style="left:951.4px;top:994.0px;height:20px;line-height:20px;font-size:11.2px;color:#f0f0f0;letter-spacing:-0.471px;">100 %</div>
<svg class="a" style="left:999.05px;top:1002.0px;" width="7.5" height="5" viewBox="0 0 7.5 5"><path d="M1 1 H6.5 L3.75 4 Z" fill="#d0d0d0"/></svg>
<svg class="a" style="left:1011.5px;top:997px;" width="14" height="14" viewBox="0 0 14 14"><path d="M5.2 12.8 V10.2 M8.8 12.8 V11 C10.2 11.2 10.8 10.8 10.8 9.8 V8.2 H11.8 L10.9 5.8 C10.9 2.8 8.8 1 6.2 1 C4 1 2.8 2.2 2.6 3.4" fill="none" stroke="#9a6cc4" stroke-width="1.4"/><path d="M1 8.6 L4.4 5.4 M3.2 4.2 C4.6 3.4 6.2 4.6 5.6 6.4 M0.6 7.4 C-0.2 8.8 1.2 10.2 2.6 9.4" fill="none" stroke="#9a6cc4" stroke-width="1.5"/><path d="M7.2 3.4 L8.4 4.4 L7.8 6.6" fill="none" stroke="#9a6cc4" stroke-width="1"/></svg>
<svg class="a" style="left:1051.7px;top:998px;" width="12" height="12" viewBox="0 0 12 12"><circle cx="6" cy="6" r="5.6" fill="#86dc86"/><path d="M3.2 6.2 L5.2 8.2 L8.9 4.2" fill="none" stroke="#1e1e1e" stroke-width="1.4"/></svg>
<div class="a t" style="left:1068.8px;top:994.0px;height:20px;line-height:20px;font-size:11.2px;color:#f0f0f0;letter-spacing:0.166px;">No issues found</div>
<div class="a" style="left:1210.8px;top:997px;width:1.4px;height:13px;background:#b8b8b8;"></div>
<svg class="a" style="left:1224.5px;top:997px;" width="15" height="14" viewBox="0 0 15 14"><path d="M13.6 0.6 L8.9 5.3" stroke="#e4e4e4" stroke-width="2.1" stroke-linecap="round"/><path d="M5.7 4.6 L1 7.8 L6.4 12.9 L9.7 7.3 Z" fill="#6b5d38" stroke="#e2c47a" stroke-width="1.2" stroke-linejoin="round"/><path d="M3.6 8 L6.2 10.4" stroke="#2d2d2d" stroke-width="1"/><path d="M2.5 1.4999999999999998 L2.95 2.8499999999999996 L4.3 3.3 L2.95 3.75 L2.5 5.1 L2.05 3.75 L0.7 3.3 L2.05 2.8499999999999996 Z M6.4 -0.30000000000000004 L6.8500000000000005 1.05 L8.200000000000001 1.5 L6.8500000000000005 1.95 L6.4 3.3 L5.95 1.95 L4.6000000000000005 1.5 L5.95 1.05 Z" fill="#4db2ff"/></svg>
<svg class="a" style="left:1240.85px;top:1001.0px;" width="9.3" height="6" viewBox="0 0 9.3 6"><path d="M1 1 H8.3 L4.65 5 Z" fill="#f4f4f4"/></svg>
<svg class="a" style="left:1279px;top:999.2px;" width="6" height="9" viewBox="0 0 6 9"><path d="M5.5 0.3 V8.7 L0.4 4.5 Z" fill="#a0a0a0"/></svg>
<div class="a" style="left:1290px;top:999.3px;width:244px;height:8.7px;background:#4d4d4d;"></div>
<svg class="a" style="left:1696.5px;top:999.2px;" width="6" height="9" viewBox="0 0 6 9"><path d="M0.5 0.3 V8.7 L5.6 4.5 Z" fill="#a0a0a0"/></svg>
<div class="a t" style="left:1729.8px;top:994.0px;height:20px;line-height:20px;font-size:11.2px;color:#f0f0f0;letter-spacing:-0.090px;">Ln: 32</div>
<div class="a t" style="left:1778px;top:994.0px;height:20px;line-height:20px;font-size:11.2px;color:#f0f0f0;letter-spacing:-0.100px;">Ch: 76</div>
<div class="a" style="left:1820px;top:995.5px;width:37px;height:17px;border:1px solid #3f3f3f;"></div>
<div class="a t" style="left:1829px;top:994.0px;height:20px;line-height:20px;font-size:11.2px;color:#f0f0f0;letter-spacing:-1.343px;">SPC</div>
<div class="a" style="left:1859px;top:995.5px;width:30px;height:17px;border:1px solid #3f3f3f;"></div>
<div class="a t" style="left:1868px;top:994.0px;height:20px;line-height:20px;font-size:11.2px;color:#f0f0f0;letter-spacing:-0.785px;">LF</div>
<div class="a" style="left:6px;top:1019px;width:1883.5px;height:10px;border:1px solid #3d3d3d;"></div>
<div class="clip" style="left:10px;top:1025px;width:120px;height:3px;z-index:3;"><div class="a t" style="left:1.5px;top:-1.2px;font-size:12.3px;line-height:14px;color:#e8e8e8;letter-spacing:-0.2px;">Error List</div></div>
<div class="clip" style="left:1850px;top:1024px;width:36px;height:4px;"><svg class="a" style="left:7px;top:0" width="28" height="10"><rect x="1.6" y="1.3" width="3.4" height="6" fill="none" stroke="#e8e8e8" stroke-width="1.2"/><path d="M16 1.4 L23 8.4 M25 1.4 L18 8.4" stroke="#e8e8e8" stroke-width="1.2"/></svg></div>
<div class="a" style="left:0px;top:1028.5px;width:1919px;height:27px;background:#1f1f1f;"></div>
<div class="a" style="left:6px;top:1027.5px;width:58px;height:21px;background:#1f1f1f;border:1px solid #3d3d3d;border-top:none;"></div>
<div class="a t" style="left:12px;top:1027.5px;height:20px;line-height:20px;font-size:12.3px;color:#ffffff;letter-spacing:-0.389px;">Error List</div>
<div class="a t" style="left:70px;top:1027.5px;height:20px;line-height:20px;font-size:12.3px;color:#c4c4c4;letter-spacing:0.179px;">Output</div>
<div class="a t" style="left:120px;top:1027.5px;height:20px;line-height:20px;font-size:12.3px;color:#c4c4c4;letter-spacing:-0.358px;">Find Symbol Results</div>
<div class="a" style="left:0px;top:1055px;width:1919px;height:24px;background:#424242;"></div>
<svg class="a" style="left:3px;top:1058px;" width="19" height="18" viewBox="0 0 19 18"><path d="M1.6 1.5 H16.6 V13 H11.2 L8.9 15.8 L6.6 13 H1.6 Z" fill="#4a4a4a" stroke="#f0f0f0" stroke-width="1.1" stroke-linejoin="miter"/><path d="M4 4.5 H9.8 M4 7.6 H9.8" stroke="#f0f0f0" stroke-width="1.1"/><path d="M11.4 4.6 L12.6 5.8 L14.8 3.2" fill="none" stroke="#d8d8d8" stroke-width="1"/></svg>
<div class="a t" style="left:28px;top:1056.5px;height:20px;line-height:20px;font-size:12.3px;color:#ffffff;letter-spacing:-0.711px;">Ready</div>
<svg class="a" style="left:1744px;top:1060px;" width="15" height="15" viewBox="0 0 15 15"><path d="M1 1.8 H13.4 V4.6 H1 Z M1.6 4.6 V13.6 H12.8 V4.6" fill="none" stroke="#f0f0f0" stroke-width="1.1"/><path d="M5.4 4.8 V9 L7.2 7.6 L9 9 V4.8" fill="none" stroke="#f0f0f0" stroke-width="1"/></svg>
<div class="a t" style="left:1765px;top:1056.5px;height:20px;line-height:20px;font-size:12.3px;color:#ffffff;letter-spacing:-0.376px;">Select Repository</div>
<svg class="a" style="left:1860.5px;top:1064.8px;" width="9" height="6" viewBox="0 0 9 6"><path d="M0.5 4.8 L4.5 0.8 L8.5 4.8 Z" fill="#f4f4f4"/></svg>
<svg class="a" style="left:1887px;top:1058px;" width="26" height="21" viewBox="0 0 26 21"><path d="M3.4 15.2 H13.8 C12.6 13.8 13.2 10 12.6 7.4 C12 4.4 10.4 2.8 8.6 2.8 C6.8 2.8 5.2 4.4 4.6 7.4 C4 10 4.6 13.8 3.4 15.2 Z" fill="none" stroke="#f0f0f0" stroke-width="1.2" stroke-linejoin="round"/><circle cx="16.2" cy="14.4" r="6.1" fill="#f59fb3"/><text x="13.4" y="18.2" font-family="Liberation Sans" font-size="10.5" fill="#2a0a14">1</text></svg>
</body></html>
